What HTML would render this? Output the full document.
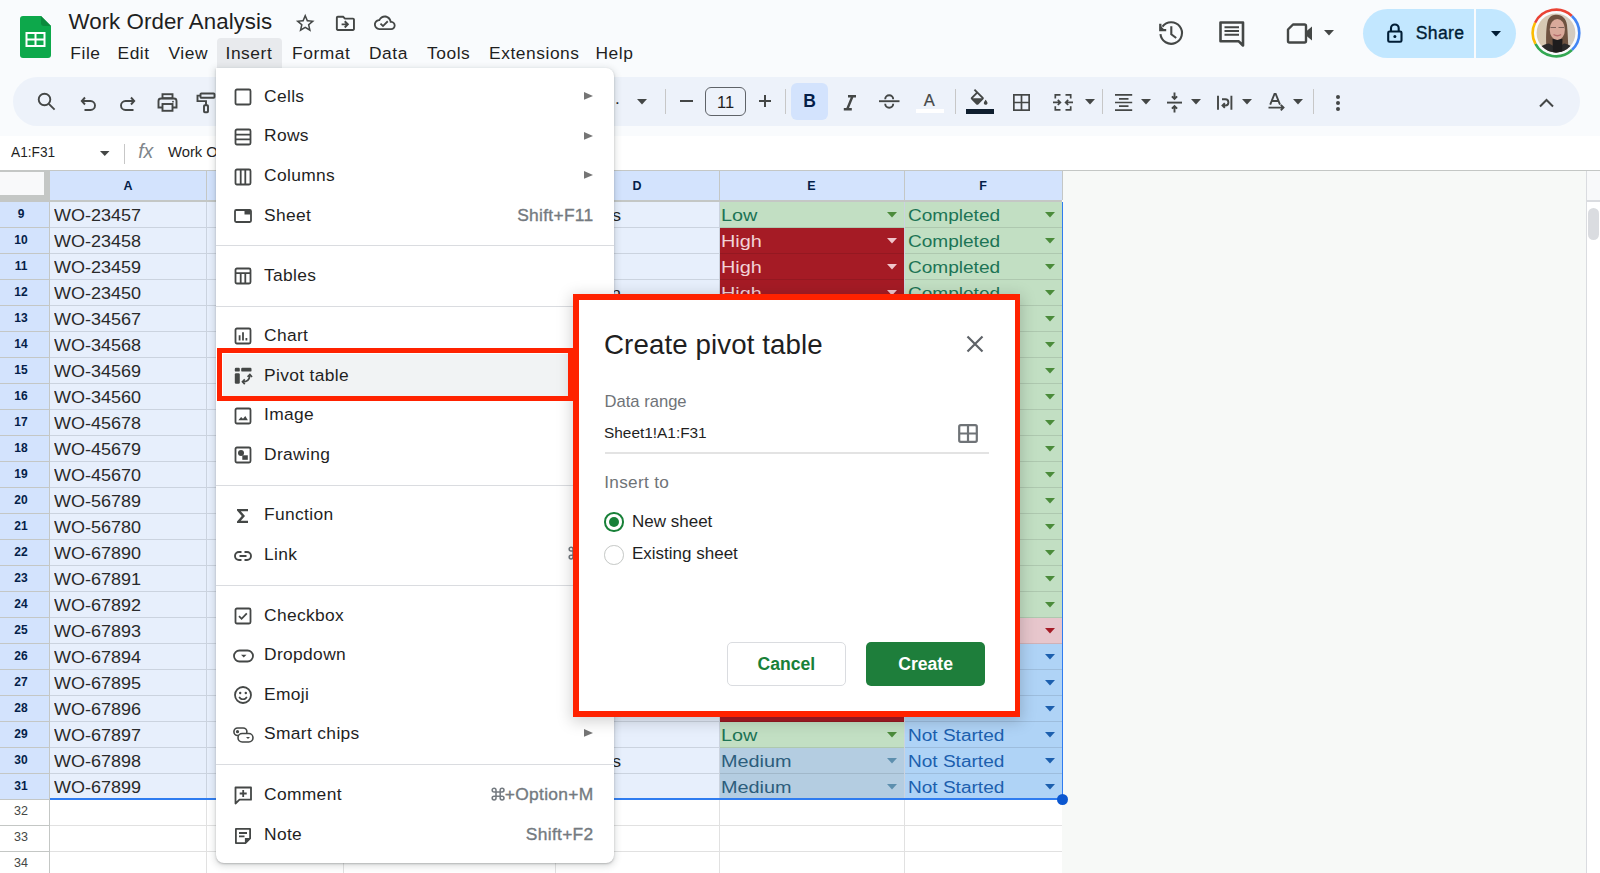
<!DOCTYPE html>
<html><head><meta charset="utf-8"><title>Work Order Analysis</title>
<style>
html,body{margin:0;padding:0;}
body{width:1600px;height:873px;overflow:hidden;position:relative;background:#fff;font-family:"Liberation Sans",sans-serif;}
.t{position:absolute;line-height:1;white-space:nowrap;}
.r{position:absolute;}
svg.r{overflow:visible;}
</style></head><body>
<div class="r" style="left:0px;top:0px;width:1600px;height:136px;background:#f9fbfd;"></div>
<svg class="r" style="left:20px;top:16px;" width="31" height="42" viewBox="0 0 31 42"><path d="M3 0H21L31 10V39a3 3 0 0 1-3 3H3a3 3 0 0 1-3-3V3a3 3 0 0 1 3-3Z" fill="#0da84b"/>
<path d="M21 0L31 10H24a3 3 0 0 1-3-3Z" fill="#0b8a3c"/>
<rect x="5.5" y="16" width="20" height="15" fill="#fff"/>
<rect x="7.5" y="18" width="7" height="4.5" fill="#0da84b"/><rect x="16.5" y="18" width="7" height="4.5" fill="#0da84b"/>
<rect x="7.5" y="24.5" width="7" height="4.5" fill="#0da84b"/><rect x="16.5" y="24.5" width="7" height="4.5" fill="#0da84b"/></svg>
<div class="t" style="left:68.5px;top:10.52px;font-size:22.3px;color:#1f1f1f;font-weight:400;letter-spacing:0.05px;">Work Order Analysis</div>
<svg class="r" style="left:294.4px;top:12.1px;" width="22" height="22" viewBox="0 0 22 22"><g transform="scale(0.935)"><path d="M22 9.24l-7.19-.62L12 2 9.19 8.63 2 9.24l5.46 4.73L5.82 21 12 17.27 18.18 21l-1.63-7.03L22 9.24zM12 15.4l-3.76 2.27 1-4.28-3.32-2.88 4.38-.38L12 6.1l1.71 4.04 4.38.38-3.32 2.88 1 4.28L12 15.4z" fill="#444746"/></g></svg>
<svg class="r" style="left:333.8px;top:11.9px;" width="24" height="24" viewBox="0 0 24 24"><g transform="scale(0.95)"><path d="M20 6h-8l-2-2H4c-1.1 0-1.99.9-1.99 2L2 18c0 1.1.9 2 2 2h16c1.1 0 2-.9 2-2V8c0-1.1-.9-2-2-2zm0 12H4V6h5.17l2 2H20v10zm-7.84-6H8v2h4.16l-1.59 1.59L11.99 17 16 13.01 11.99 9l-1.41 1.41L12.16 12z" fill="#444746"/></g></svg>
<svg class="r" style="left:374px;top:12.4px;" width="24" height="24" viewBox="0 0 24 24"><g transform="scale(0.9)"><path d="M19.35 10.04C18.67 6.59 15.64 4 12 4 9.11 4 6.6 5.64 5.35 8.04 2.34 8.36 0 10.91 0 14c0 3.310 2.69 6 6 6h13c2.76 0 5-2.24 5-5 0-2.64-2.05-4.78-4.65-4.96zM19 18H6c-2.21 0-4-1.79-4-4 0-2.05 1.53-3.76 3.56-3.970l1.070-.11.5-.95C8.08 7.14 9.94 6 12 6c2.62 0 4.88 1.86 5.39 4.43l.3 1.5 1.53.11c1.56.1 2.78 1.41 2.78 2.96 0 1.65-1.35 3-3 3zm-9-3.82l-2.09-2.09L6.5 13.5 10 17l6.01-6.01-1.41-1.41z" fill="#444746"/></g></svg>
<div class="r" style="left:216.5px;top:38px;width:65.5px;height:30px;background:#e8eaed;border-radius:4px 4px 0 0;"></div>
<div class="t" style="left:70.3px;top:44.67px;font-size:17.4px;color:#1f1f1f;font-weight:400;letter-spacing:0.55px;">File</div>
<div class="t" style="left:117.5px;top:44.67px;font-size:17.4px;color:#1f1f1f;font-weight:400;letter-spacing:0.55px;">Edit</div>
<div class="t" style="left:168.5px;top:44.67px;font-size:17.4px;color:#1f1f1f;font-weight:400;letter-spacing:0.55px;">View</div>
<div class="t" style="left:225.5px;top:44.67px;font-size:17.4px;color:#1f1f1f;font-weight:400;letter-spacing:0.55px;">Insert</div>
<div class="t" style="left:292px;top:44.67px;font-size:17.4px;color:#1f1f1f;font-weight:400;letter-spacing:0.55px;">Format</div>
<div class="t" style="left:369px;top:44.67px;font-size:17.4px;color:#1f1f1f;font-weight:400;letter-spacing:0.55px;">Data</div>
<div class="t" style="left:427px;top:44.67px;font-size:17.4px;color:#1f1f1f;font-weight:400;letter-spacing:0.55px;">Tools</div>
<div class="t" style="left:489px;top:44.67px;font-size:17.4px;color:#1f1f1f;font-weight:400;letter-spacing:0.55px;">Extensions</div>
<div class="t" style="left:595.5px;top:44.67px;font-size:17.4px;color:#1f1f1f;font-weight:400;letter-spacing:0.55px;">Help</div>
<svg class="r" style="left:1157px;top:19px;" width="28" height="28" viewBox="0 0 28 28"><path d="M5.46 7.65A10.8 10.8 0 1 1 3.46 15.13" fill="none" stroke="#444746" stroke-width="2.1"/><path d="M3.3 4.8V11.2H9.2" fill="none" stroke="#444746" stroke-width="2.3"/><path d="M3.3 6.5V11.2H8z" fill="#444746"/><path d="M14.3 7.3V15.3L19.2 19" fill="none" stroke="#444746" stroke-width="2.1"/></svg>
<svg class="r" style="left:1219px;top:21px;" width="27" height="25" viewBox="0 0 27 25"><path d="M1.5 1.5h22.5v16.5h-0v6.5l-4.2-4.2H1.5z" fill="none" stroke="#444746" stroke-width="2.6" stroke-linejoin="round"/><path d="M5.5 6.2h14.5M5.5 10h14.5M5.5 13.8h14.5" stroke="#444746" stroke-width="2"/></svg>
<svg class="r" style="left:1287px;top:23px;" width="26" height="21" viewBox="0 0 26 21"><path d="M6 1.5h11.5a1.5 1.5 0 0 1 1.5 1.5v15a1.5 1.5 0 0 1-1.5 1.5H2.5A1.5 1.5 0 0 1 1 18V6.5z" fill="none" stroke="#444746" stroke-width="2.4" stroke-linejoin="round"/><path d="M19 8.5L25 3.5v14l-6-5z" fill="#444746"/></svg>
<svg class="r" style="left:1324.3px;top:30.25px;" width="10" height="5.5" viewBox="0 0 10 5.5"><path d="M0 0H10L5.0 5.5Z" fill="#444746"/></svg>
<div class="r" style="left:1363px;top:9px;width:153px;height:49px;background:#c2e7ff;border-radius:24.5px;"></div>
<div class="r" style="left:1474.3px;top:9px;width:1.6px;height:49px;background:#f9fbfd;"></div>
<svg class="r" style="left:1387px;top:22.5px;" width="16" height="20" viewBox="0 0 16 20"><rect x="1.2" y="8.5" width="13.3" height="10.3" rx="1.3" fill="none" stroke="#001d35" stroke-width="2.1"/><path d="M4 8.5V5.3a3.85 3.85 0 0 1 7.7 0v3.2" fill="none" stroke="#001d35" stroke-width="2.1"/><circle cx="7.85" cy="13.6" r="1.5" fill="#001d35"/></svg>
<div class="t" style="left:1415.8px;top:24.70px;font-size:17.6px;color:#001d35;font-weight:400;letter-spacing:0.3px;-webkit-text-stroke:0.35px #001d35;">Share</div>
<svg class="r" style="left:1490.5px;top:31.25px;" width="10" height="5.5" viewBox="0 0 10 5.5"><path d="M0 0H10L5.0 5.5Z" fill="#001d35"/></svg>
<svg class="r" style="left:1531.3px;top:8.1px;" width="50" height="50" viewBox="0 0 50 50"><defs><linearGradient id="abg" x1="0" y1="0" x2="1" y2="0"><stop offset="0" stop-color="#d9c8ae"/><stop offset="1" stop-color="#d2ccc4"/></linearGradient></defs>
<path d="M4.06 14.79A23.3 23.3 0 0 1 40.89 7.96" fill="none" stroke="#ea4335" stroke-width="2.6"/>
<path d="M40.89 7.96A23.3 23.3 0 0 1 40.89 42.04" fill="none" stroke="#4285f4" stroke-width="2.6"/>
<path d="M40.89 42.04A23.3 23.3 0 0 1 4.43 35.94" fill="none" stroke="#34a853" stroke-width="2.6"/>
<path d="M4.43 35.94A23.3 23.3 0 0 1 4.06 14.79" fill="none" stroke="#fbbc04" stroke-width="2.6"/>
<clipPath id="ac"><circle cx="25" cy="25" r="19.4"/></clipPath>
<g clip-path="url(#ac)"><rect x="0" y="0" width="50" height="50" fill="url(#abg)"/>
<path d="M15.5 50C15 36 14.5 20 17 12C19 7.5 23 6.5 26 6.7C31 7 35 10 36 17C37 26 37 38 38 50Z" fill="#6e5240"/>
<path d="M2 50C5 40 12 36.5 18 35.5L26 40L33 35.5C39 36.5 45 40 48 50Z" fill="#2b2a2b"/>
<path d="M21.5 31L22 45H31L31.5 31Z" fill="#1e1c1d"/>
<ellipse cx="26.3" cy="21.5" rx="7.6" ry="10.5" fill="#d9a99a"/>
<path d="M19.5 19.5h5.5M27.5 19.5h5.5" stroke="#7b6058" stroke-width="1.1"/>
<path d="M22.5 26.5q3.8 2.5 7.6 0" fill="none" stroke="#b56d6d" stroke-width="1.3"/>
</g></svg>
<div class="r" style="left:13px;top:77px;width:1567px;height:49px;background:#edf2fa;border-radius:24.5px;"></div>
<svg class="r" style="left:37px;top:92px;" width="19" height="19" viewBox="0 0 19 19"><circle cx="7.5" cy="7.5" r="5.8" fill="none" stroke="#444746" stroke-width="1.9"/><path d="M11.8 11.8l5.8 5.8" fill="none" stroke="#444746" stroke-width="1.9"/></svg>
<svg class="r" style="left:80px;top:96px;" width="17" height="15" viewBox="0 0 17 15"><path d="M5 1.5L1.8 5 5 8.5" fill="none" stroke="#444746" stroke-width="1.9"/><path d="M2 5h8.5a4.5 4.5 0 0 1 0 9H4.5" fill="none" stroke="#444746" stroke-width="1.9"/></svg>
<svg class="r" style="left:119px;top:96px;" width="17" height="15" viewBox="0 0 17 15"><path d="M12 1.5L15.2 5 12 8.5" fill="none" stroke="#444746" stroke-width="1.9"/><path d="M15 5H6.5a4.5 4.5 0 0 0 0 9h8" fill="none" stroke="#444746" stroke-width="1.9"/></svg>
<svg class="r" style="left:157px;top:93px;" width="21" height="19" viewBox="0 0 21 19"><rect x="5.5" y="1.2" width="10" height="4" fill="none" stroke="#444746" stroke-width="1.9"/><path d="M5 14.5H1.5V8a2.5 2.5 0 0 1 2.5-2.5h13A2.5 2.5 0 0 1 19.5 8v6.5H16" fill="none" stroke="#444746" stroke-width="1.9"/><rect x="5.5" y="11" width="10" height="6.8" fill="none" stroke="#444746" stroke-width="1.9"/><circle cx="16" cy="8.7" r="0.9" fill="#444746"/></svg>
<svg class="r" style="left:196px;top:92px;" width="20" height="22" viewBox="0 0 20 22"><rect x="4.5" y="1.5" width="14" height="4.2" rx="0.8" fill="none" stroke="#444746" stroke-width="1.9"/><path d="M4.5 3.6H1.5v5.5h8.5v4" fill="none" stroke="#444746" stroke-width="1.9"/><rect x="8" y="13.2" width="4" height="7" rx="0.8" fill="none" stroke="#444746" stroke-width="1.9"/></svg>
<div class="t" style="left:615px;top:89.61px;font-size:17px;color:#1f1f1f;font-weight:400;">.</div>
<svg class="r" style="left:637.0px;top:99.25px;" width="10" height="5.5" viewBox="0 0 10 5.5"><path d="M0 0H10L5.0 5.5Z" fill="#444746"/></svg>
<div class="r" style="left:665px;top:89px;width:1px;height:24.5px;background:#c7c7c7;"></div>
<div class="r" style="left:680px;top:100px;width:12.5px;height:2px;background:#444746;"></div>
<div class="r" style="left:705px;top:86.5px;width:41px;height:29px;background:transparent;border:1.3px solid #5f6368;border-radius:6px;box-sizing:border-box;"></div>
<div class="t" style="left:725.5px;transform:translateX(-50%);top:93.53px;font-size:16.5px;color:#1f1f1f;font-weight:400;">11</div>
<div class="r" style="left:758.5px;top:100px;width:12.5px;height:2px;background:#444746;"></div>
<div class="r" style="left:763.75px;top:94.75px;width:2px;height:12.5px;background:#444746;"></div>
<div class="r" style="left:785.2px;top:89px;width:1px;height:24.5px;background:#c7c7c7;"></div>
<div class="r" style="left:791px;top:83px;width:37px;height:36.6px;background:#d3e3fd;border-radius:6px;"></div>
<div class="t" style="left:809.7px;transform:translateX(-50%);top:93.18px;font-size:17.5px;color:#041e49;font-weight:700;">B</div>
<svg class="r" style="left:842.5px;top:94.5px;" width="14" height="16" viewBox="0 0 14 16"><path d="M5 1.2h8M0.8 14.2h8M9.5 1.2L4.2 14.2" fill="none" stroke="#444746" stroke-width="2.4"/></svg>
<svg class="r" style="left:878.8px;top:94px;" width="20.5" height="16" viewBox="0 0 20.5 16"><path d="M0 7.2h20.5" fill="none" stroke="#444746" stroke-width="1.9"/><path d="M6.2 5.2a4 4 0 0 1 8 0" fill="none" stroke="#444746" stroke-width="1.9"/><path d="M6.2 9.8a4 4 0 0 0 8 0" fill="none" stroke="#444746" stroke-width="1.9"/></svg>
<div class="t" style="left:929.2px;transform:translateX(-50%);top:92.23px;font-size:16.5px;color:#444746;font-weight:400;-webkit-text-stroke:0.2px #444746;">A</div>
<div class="r" style="left:915.6px;top:108.8px;width:28px;height:4.7px;background:#ffffff;"></div>
<div class="r" style="left:955px;top:89px;width:1px;height:24.5px;background:#c7c7c7;"></div>
<svg class="r" style="left:968.2px;top:88.6px;" width="20" height="17" viewBox="0 0 20 17"><g transform="scale(0.93)"><path d="M16.56 8.94L7.62 0 6.21 1.41l2.38 2.38-5.15 5.15c-.59.59-.59 1.54 0 2.12l5.5 5.5c.29.29.68.44 1.06.44s.77-.15 1.06-.44l5.5-5.5c.59-.58.59-1.530 0-2.12zM5.21 10L10 5.21 14.79 10H5.21zM19 11.5s-2 2.17-2 3.5c0 1.1.9 2 2 2s2-.9 2-2c0-1.33-2-3.5-2-3.5z" fill="#444746"/></g></svg>
<div class="r" style="left:966.4px;top:108.7px;width:27.4px;height:5px;background:#0f1e2e;"></div>
<svg class="r" style="left:1013.3px;top:94.2px;" width="17" height="17" viewBox="0 0 17 17"><rect x="0.85" y="0.85" width="15.3" height="15.3" fill="none" stroke="#444746" stroke-width="1.7"/><path d="M8.5 1v15M1 8.5h15" stroke="#444746" stroke-width="1.7"/></svg>
<svg class="r" style="left:1053px;top:94px;" width="20" height="17" viewBox="0 0 20 17"><path d="M7.5 0.9H2.3V4.6M2.3 12.2V15.9H7.5M12.5 0.9H17.7V4.6M17.7 12.2V15.9H12.5" fill="none" stroke="#444746" stroke-width="1.7"/><path d="M0 8.4H7M4.8 5.8L7.4 8.4 4.8 11M20 8.4H13M15.2 5.8L12.6 8.4 15.2 11" fill="none" stroke="#444746" stroke-width="1.7"/></svg>
<svg class="r" style="left:1084.5px;top:99.25px;" width="10" height="5.5" viewBox="0 0 10 5.5"><path d="M0 0H10L5.0 5.5Z" fill="#444746"/></svg>
<div class="r" style="left:1102.2px;top:89px;width:1px;height:24.5px;background:#c7c7c7;"></div>
<svg class="r" style="left:1114.8px;top:94px;" width="18" height="17" viewBox="0 0 18 17"><path d="M0 0.9h17.2M4 4.9h9.5M0 8.5h17.2M4 12.1h9.5M0 16.1h17.2" stroke="#444746" stroke-width="1.6"/></svg>
<svg class="r" style="left:1140.8px;top:99.25px;" width="10" height="5.5" viewBox="0 0 10 5.5"><path d="M0 0H10L5.0 5.5Z" fill="#444746"/></svg>
<svg class="r" style="left:1167px;top:92px;" width="15" height="21" viewBox="0 0 15 21"><path d="M0 10.6H15" fill="none" stroke="#444746" stroke-width="1.9"/><path d="M7.5 0.5V7M4.9 4.4L7.5 7 10.1 4.4M7.5 20.5V14M4.9 16.6L7.5 14 10.1 16.6" fill="none" stroke="#444746" stroke-width="1.9"/></svg>
<svg class="r" style="left:1191.4px;top:99.25px;" width="10" height="5.5" viewBox="0 0 10 5.5"><path d="M0 0H10L5.0 5.5Z" fill="#444746"/></svg>
<svg class="r" style="left:1217px;top:95px;" width="16" height="15.5" viewBox="0 0 16 15.5"><path d="M1 0.8V14.8M14.4 0.8V14.8" fill="none" stroke="#444746" stroke-width="1.9"/><path d="M5 4.3H8.3a3.1 3.1 0 0 1 0 6.2H5.6M7.8 8.2L5.5 10.5 7.8 12.8" fill="none" stroke="#444746" stroke-width="1.9"/></svg>
<svg class="r" style="left:1242.0px;top:99.25px;" width="10" height="5.5" viewBox="0 0 10 5.5"><path d="M0 0H10L5.0 5.5Z" fill="#444746"/></svg>
<svg class="r" style="left:1268px;top:93px;" width="18" height="20" viewBox="0 0 18 20"><path d="M2.2 11.6L6.5 1h1.2L12 11.6M3.8 8h6.6" fill="none" stroke="#444746" stroke-width="1.9"/><path d="M0.5 14.6H15.5M12.8 11.9L15.5 14.6 12.8 17.3" fill="none" stroke="#444746" stroke-width="1.9"/></svg>
<svg class="r" style="left:1292.6px;top:99.25px;" width="10" height="5.5" viewBox="0 0 10 5.5"><path d="M0 0H10L5.0 5.5Z" fill="#444746"/></svg>
<div class="r" style="left:1312.5px;top:89px;width:1px;height:24.5px;background:#c7c7c7;"></div>
<div class="r" style="left:1336px;top:94.5px;width:4px;height:4px;border-radius:2px;background:#444746"></div>
<div class="r" style="left:1336px;top:100.8px;width:4px;height:4px;border-radius:2px;background:#444746"></div>
<div class="r" style="left:1336px;top:107.1px;width:4px;height:4px;border-radius:2px;background:#444746"></div>
<svg class="r" style="left:1539px;top:97.5px;" width="15" height="10" viewBox="0 0 15 10"><path d="M1 8.5l6.5-6.5 6.5 6.5" fill="none" stroke="#444746" stroke-width="2"/></svg>
<div class="r" style="left:0px;top:136px;width:1600px;height:34.5px;background:#ffffff;"></div>
<div class="t" style="left:10.5px;top:145.47px;font-size:14.8px;color:#1f1f1f;font-weight:400;transform:scaleX(0.925);transform-origin:0 0;">A1:F31</div>
<svg class="r" style="left:99.75px;top:151.0px;" width="9.5" height="5" viewBox="0 0 9.5 5"><path d="M0 0H9.5L4.75 5Z" fill="#444746"/></svg>
<div class="r" style="left:124px;top:143.7px;width:1px;height:20px;background:#c7c7c7;"></div>
<div class="t" style="left:138.2px;top:141.99px;font-size:19.5px;color:#80868b;font-weight:400;font-family:"Liberation Serif",serif;"><i>fx</i></div>
<div class="t" style="left:168px;top:144.97px;font-size:14.8px;color:#1f1f1f;font-weight:400;">Work Order Analysis</div>
<div class="r" style="left:0px;top:169.7px;width:1600px;height:1.5px;background:#c4c7c5;"></div>
<div class="r" style="left:1062px;top:171px;width:538px;height:702px;background:#f7f9f7;"></div>
<div class="r" style="left:1586px;top:171px;width:1px;height:702px;background:#dadce0;"></div>
<div class="r" style="left:1587px;top:171px;width:13px;height:29px;background:#f8f9fa;"></div>
<div class="r" style="left:1587px;top:200px;width:13px;height:1.5px;background:#dadce0;"></div>
<div class="r" style="left:1587px;top:201.5px;width:13px;height:671.5px;background:#ffffff;"></div>
<div class="r" style="left:1588px;top:208px;width:11px;height:32px;background:#dadce0;border-radius:5.5px;"></div>
<div class="r" style="left:0px;top:171px;width:49.5px;height:31px;background:#c4c7c5;"></div>
<div class="r" style="left:0px;top:171.5px;width:44px;height:23.5px;background:#f8f9fa;"></div>
<div class="r" style="left:50px;top:171px;width:1012px;height:29px;background:#d3e3fd;"></div>
<div class="r" style="left:50px;top:200px;width:1012px;height:2px;background:#c4c7c5;"></div>
<div class="r" style="left:205.5px;top:171px;width:1px;height:29px;background:#c4c7c5;"></div>
<div class="r" style="left:342.5px;top:171px;width:1px;height:29px;background:#c4c7c5;"></div>
<div class="r" style="left:554.5px;top:171px;width:1px;height:29px;background:#c4c7c5;"></div>
<div class="r" style="left:718.5px;top:171px;width:1px;height:29px;background:#c4c7c5;"></div>
<div class="r" style="left:903.5px;top:171px;width:1px;height:29px;background:#c4c7c5;"></div>
<div class="r" style="left:1061.5px;top:171px;width:1px;height:29px;background:#c4c7c5;"></div>
<div class="t" style="left:128.0px;transform:translateX(-50%);top:179.72px;font-size:12.5px;color:#041e49;font-weight:700;">A</div>
<div class="t" style="left:274.5px;transform:translateX(-50%);top:179.72px;font-size:12.5px;color:#041e49;font-weight:700;">B</div>
<div class="t" style="left:449.0px;transform:translateX(-50%);top:179.72px;font-size:12.5px;color:#041e49;font-weight:700;">C</div>
<div class="t" style="left:637.0px;transform:translateX(-50%);top:179.72px;font-size:12.5px;color:#041e49;font-weight:700;">D</div>
<div class="t" style="left:811.5px;transform:translateX(-50%);top:179.72px;font-size:12.5px;color:#041e49;font-weight:700;">E</div>
<div class="t" style="left:983.0px;transform:translateX(-50%);top:179.72px;font-size:12.5px;color:#041e49;font-weight:700;">F</div>
<div class="r" style="left:0px;top:202px;width:49px;height:25px;background:#d3e3fd;"></div>
<div class="r" style="left:0px;top:227px;width:49px;height:1px;background:#c4c7c5;"></div>
<div class="r" style="left:49px;top:202px;width:1px;height:26px;background:#c4c7c5;"></div>
<div class="r" style="left:50px;top:202px;width:1012px;height:25px;background:#e7effc;"></div>
<div class="r" style="left:50px;top:227px;width:1012px;height:1px;background:#cbd3df;"></div>
<div class="r" style="left:205.5px;top:202px;width:1px;height:26px;background:#cbd3df;"></div>
<div class="r" style="left:342.5px;top:202px;width:1px;height:26px;background:#cbd3df;"></div>
<div class="r" style="left:554.5px;top:202px;width:1px;height:26px;background:#cbd3df;"></div>
<div class="r" style="left:718.5px;top:202px;width:1px;height:26px;background:#cbd3df;"></div>
<div class="r" style="left:903.5px;top:202px;width:1px;height:26px;background:#cbd3df;"></div>
<div class="t" style="left:21px;transform:translateX(-50%);top:207.74px;font-size:12px;color:#041e49;font-weight:700;">9</div>
<div class="t" style="left:54.4px;top:208.05px;font-size:16px;color:#2a2a2a;font-weight:400;transform:scaleX(1.125);transform-origin:0 0;">WO-23457</div>
<div class="r" style="left:719.5px;top:202px;width:184px;height:26px;background:#c2dfc3;"></div>
<div class="r" style="left:719.5px;top:227px;width:184px;height:1px;background:rgba(0,0,0,0.1);"></div>
<div class="t" style="left:721.4px;top:207.55px;font-size:16px;color:#1c7455;font-weight:400;transform:scaleX(1.24);transform-origin:0 0;">Low</div>
<svg class="r" style="left:886.6px;top:212.05px;" width="10" height="5.5" viewBox="0 0 10 5.5"><path d="M0 0H10L5.0 5.5Z" fill="#4b8b3b"/></svg>
<div class="r" style="left:904.5px;top:202px;width:157px;height:26px;background:#c2dfc3;"></div>
<div class="r" style="left:904.5px;top:227px;width:157px;height:1px;background:rgba(0,0,0,0.1);"></div>
<div class="t" style="left:908.1px;top:207.55px;font-size:16px;color:#1c7455;font-weight:400;transform:scaleX(1.19);transform-origin:0 0;">Completed</div>
<svg class="r" style="left:1044.5px;top:212.05px;" width="10" height="5.5" viewBox="0 0 10 5.5"><path d="M0 0H10L5.0 5.5Z" fill="#4b8b3b"/></svg>
<div class="r" style="left:0px;top:228px;width:49px;height:25px;background:#d3e3fd;"></div>
<div class="r" style="left:0px;top:253px;width:49px;height:1px;background:#c4c7c5;"></div>
<div class="r" style="left:49px;top:228px;width:1px;height:26px;background:#c4c7c5;"></div>
<div class="r" style="left:50px;top:228px;width:1012px;height:25px;background:#e7effc;"></div>
<div class="r" style="left:50px;top:253px;width:1012px;height:1px;background:#cbd3df;"></div>
<div class="r" style="left:205.5px;top:228px;width:1px;height:26px;background:#cbd3df;"></div>
<div class="r" style="left:342.5px;top:228px;width:1px;height:26px;background:#cbd3df;"></div>
<div class="r" style="left:554.5px;top:228px;width:1px;height:26px;background:#cbd3df;"></div>
<div class="r" style="left:718.5px;top:228px;width:1px;height:26px;background:#cbd3df;"></div>
<div class="r" style="left:903.5px;top:228px;width:1px;height:26px;background:#cbd3df;"></div>
<div class="t" style="left:21px;transform:translateX(-50%);top:233.74px;font-size:12px;color:#041e49;font-weight:700;">10</div>
<div class="t" style="left:54.4px;top:234.05px;font-size:16px;color:#2a2a2a;font-weight:400;transform:scaleX(1.125);transform-origin:0 0;">WO-23458</div>
<div class="r" style="left:719.5px;top:228px;width:184px;height:26px;background:#a51b25;"></div>
<div class="r" style="left:719.5px;top:253px;width:184px;height:1px;background:rgba(0,0,0,0.1);"></div>
<div class="t" style="left:721.4px;top:233.55px;font-size:16px;color:#f2d3d8;font-weight:400;transform:scaleX(1.24);transform-origin:0 0;">High</div>
<svg class="r" style="left:886.6px;top:238.05px;" width="10" height="5.5" viewBox="0 0 10 5.5"><path d="M0 0H10L5.0 5.5Z" fill="#f0c6cc"/></svg>
<div class="r" style="left:904.5px;top:228px;width:157px;height:26px;background:#c2dfc3;"></div>
<div class="r" style="left:904.5px;top:253px;width:157px;height:1px;background:rgba(0,0,0,0.1);"></div>
<div class="t" style="left:908.1px;top:233.55px;font-size:16px;color:#1c7455;font-weight:400;transform:scaleX(1.19);transform-origin:0 0;">Completed</div>
<svg class="r" style="left:1044.5px;top:238.05px;" width="10" height="5.5" viewBox="0 0 10 5.5"><path d="M0 0H10L5.0 5.5Z" fill="#4b8b3b"/></svg>
<div class="r" style="left:0px;top:254px;width:49px;height:25px;background:#d3e3fd;"></div>
<div class="r" style="left:0px;top:279px;width:49px;height:1px;background:#c4c7c5;"></div>
<div class="r" style="left:49px;top:254px;width:1px;height:26px;background:#c4c7c5;"></div>
<div class="r" style="left:50px;top:254px;width:1012px;height:25px;background:#e7effc;"></div>
<div class="r" style="left:50px;top:279px;width:1012px;height:1px;background:#cbd3df;"></div>
<div class="r" style="left:205.5px;top:254px;width:1px;height:26px;background:#cbd3df;"></div>
<div class="r" style="left:342.5px;top:254px;width:1px;height:26px;background:#cbd3df;"></div>
<div class="r" style="left:554.5px;top:254px;width:1px;height:26px;background:#cbd3df;"></div>
<div class="r" style="left:718.5px;top:254px;width:1px;height:26px;background:#cbd3df;"></div>
<div class="r" style="left:903.5px;top:254px;width:1px;height:26px;background:#cbd3df;"></div>
<div class="t" style="left:21px;transform:translateX(-50%);top:259.74px;font-size:12px;color:#041e49;font-weight:700;">11</div>
<div class="t" style="left:54.4px;top:260.05px;font-size:16px;color:#2a2a2a;font-weight:400;transform:scaleX(1.125);transform-origin:0 0;">WO-23459</div>
<div class="r" style="left:719.5px;top:254px;width:184px;height:26px;background:#a51b25;"></div>
<div class="r" style="left:719.5px;top:279px;width:184px;height:1px;background:rgba(0,0,0,0.1);"></div>
<div class="t" style="left:721.4px;top:259.55px;font-size:16px;color:#f2d3d8;font-weight:400;transform:scaleX(1.24);transform-origin:0 0;">High</div>
<svg class="r" style="left:886.6px;top:264.05px;" width="10" height="5.5" viewBox="0 0 10 5.5"><path d="M0 0H10L5.0 5.5Z" fill="#f0c6cc"/></svg>
<div class="r" style="left:904.5px;top:254px;width:157px;height:26px;background:#c2dfc3;"></div>
<div class="r" style="left:904.5px;top:279px;width:157px;height:1px;background:rgba(0,0,0,0.1);"></div>
<div class="t" style="left:908.1px;top:259.55px;font-size:16px;color:#1c7455;font-weight:400;transform:scaleX(1.19);transform-origin:0 0;">Completed</div>
<svg class="r" style="left:1044.5px;top:264.05px;" width="10" height="5.5" viewBox="0 0 10 5.5"><path d="M0 0H10L5.0 5.5Z" fill="#4b8b3b"/></svg>
<div class="r" style="left:0px;top:280px;width:49px;height:25px;background:#d3e3fd;"></div>
<div class="r" style="left:0px;top:305px;width:49px;height:1px;background:#c4c7c5;"></div>
<div class="r" style="left:49px;top:280px;width:1px;height:26px;background:#c4c7c5;"></div>
<div class="r" style="left:50px;top:280px;width:1012px;height:25px;background:#e7effc;"></div>
<div class="r" style="left:50px;top:305px;width:1012px;height:1px;background:#cbd3df;"></div>
<div class="r" style="left:205.5px;top:280px;width:1px;height:26px;background:#cbd3df;"></div>
<div class="r" style="left:342.5px;top:280px;width:1px;height:26px;background:#cbd3df;"></div>
<div class="r" style="left:554.5px;top:280px;width:1px;height:26px;background:#cbd3df;"></div>
<div class="r" style="left:718.5px;top:280px;width:1px;height:26px;background:#cbd3df;"></div>
<div class="r" style="left:903.5px;top:280px;width:1px;height:26px;background:#cbd3df;"></div>
<div class="t" style="left:21px;transform:translateX(-50%);top:285.74px;font-size:12px;color:#041e49;font-weight:700;">12</div>
<div class="t" style="left:54.4px;top:286.05px;font-size:16px;color:#2a2a2a;font-weight:400;transform:scaleX(1.125);transform-origin:0 0;">WO-23450</div>
<div class="r" style="left:719.5px;top:280px;width:184px;height:26px;background:#a51b25;"></div>
<div class="r" style="left:719.5px;top:305px;width:184px;height:1px;background:rgba(0,0,0,0.1);"></div>
<div class="t" style="left:721.4px;top:285.55px;font-size:16px;color:#f2d3d8;font-weight:400;transform:scaleX(1.24);transform-origin:0 0;">High</div>
<svg class="r" style="left:886.6px;top:290.05px;" width="10" height="5.5" viewBox="0 0 10 5.5"><path d="M0 0H10L5.0 5.5Z" fill="#f0c6cc"/></svg>
<div class="r" style="left:904.5px;top:280px;width:157px;height:26px;background:#c2dfc3;"></div>
<div class="r" style="left:904.5px;top:305px;width:157px;height:1px;background:rgba(0,0,0,0.1);"></div>
<div class="t" style="left:908.1px;top:285.55px;font-size:16px;color:#1c7455;font-weight:400;transform:scaleX(1.19);transform-origin:0 0;">Completed</div>
<svg class="r" style="left:1044.5px;top:290.05px;" width="10" height="5.5" viewBox="0 0 10 5.5"><path d="M0 0H10L5.0 5.5Z" fill="#4b8b3b"/></svg>
<div class="r" style="left:0px;top:306px;width:49px;height:25px;background:#d3e3fd;"></div>
<div class="r" style="left:0px;top:331px;width:49px;height:1px;background:#c4c7c5;"></div>
<div class="r" style="left:49px;top:306px;width:1px;height:26px;background:#c4c7c5;"></div>
<div class="r" style="left:50px;top:306px;width:1012px;height:25px;background:#e7effc;"></div>
<div class="r" style="left:50px;top:331px;width:1012px;height:1px;background:#cbd3df;"></div>
<div class="r" style="left:205.5px;top:306px;width:1px;height:26px;background:#cbd3df;"></div>
<div class="r" style="left:342.5px;top:306px;width:1px;height:26px;background:#cbd3df;"></div>
<div class="r" style="left:554.5px;top:306px;width:1px;height:26px;background:#cbd3df;"></div>
<div class="r" style="left:718.5px;top:306px;width:1px;height:26px;background:#cbd3df;"></div>
<div class="r" style="left:903.5px;top:306px;width:1px;height:26px;background:#cbd3df;"></div>
<div class="t" style="left:21px;transform:translateX(-50%);top:311.74px;font-size:12px;color:#041e49;font-weight:700;">13</div>
<div class="t" style="left:54.4px;top:312.05px;font-size:16px;color:#2a2a2a;font-weight:400;transform:scaleX(1.125);transform-origin:0 0;">WO-34567</div>
<div class="r" style="left:719.5px;top:306px;width:184px;height:26px;background:#c2dfc3;"></div>
<div class="r" style="left:719.5px;top:331px;width:184px;height:1px;background:rgba(0,0,0,0.1);"></div>
<svg class="r" style="left:886.6px;top:316.05px;" width="10" height="5.5" viewBox="0 0 10 5.5"><path d="M0 0H10L5.0 5.5Z" fill="#4b8b3b"/></svg>
<div class="r" style="left:904.5px;top:306px;width:157px;height:26px;background:#c2dfc3;"></div>
<div class="r" style="left:904.5px;top:331px;width:157px;height:1px;background:rgba(0,0,0,0.1);"></div>
<div class="t" style="left:908.1px;top:311.55px;font-size:16px;color:#1c7455;font-weight:400;transform:scaleX(1.19);transform-origin:0 0;">Completed</div>
<svg class="r" style="left:1044.5px;top:316.05px;" width="10" height="5.5" viewBox="0 0 10 5.5"><path d="M0 0H10L5.0 5.5Z" fill="#4b8b3b"/></svg>
<div class="r" style="left:0px;top:332px;width:49px;height:25px;background:#d3e3fd;"></div>
<div class="r" style="left:0px;top:357px;width:49px;height:1px;background:#c4c7c5;"></div>
<div class="r" style="left:49px;top:332px;width:1px;height:26px;background:#c4c7c5;"></div>
<div class="r" style="left:50px;top:332px;width:1012px;height:25px;background:#e7effc;"></div>
<div class="r" style="left:50px;top:357px;width:1012px;height:1px;background:#cbd3df;"></div>
<div class="r" style="left:205.5px;top:332px;width:1px;height:26px;background:#cbd3df;"></div>
<div class="r" style="left:342.5px;top:332px;width:1px;height:26px;background:#cbd3df;"></div>
<div class="r" style="left:554.5px;top:332px;width:1px;height:26px;background:#cbd3df;"></div>
<div class="r" style="left:718.5px;top:332px;width:1px;height:26px;background:#cbd3df;"></div>
<div class="r" style="left:903.5px;top:332px;width:1px;height:26px;background:#cbd3df;"></div>
<div class="t" style="left:21px;transform:translateX(-50%);top:337.74px;font-size:12px;color:#041e49;font-weight:700;">14</div>
<div class="t" style="left:54.4px;top:338.05px;font-size:16px;color:#2a2a2a;font-weight:400;transform:scaleX(1.125);transform-origin:0 0;">WO-34568</div>
<div class="r" style="left:719.5px;top:332px;width:184px;height:26px;background:#a51b25;"></div>
<div class="r" style="left:719.5px;top:357px;width:184px;height:1px;background:rgba(0,0,0,0.1);"></div>
<svg class="r" style="left:886.6px;top:342.05px;" width="10" height="5.5" viewBox="0 0 10 5.5"><path d="M0 0H10L5.0 5.5Z" fill="#f0c6cc"/></svg>
<div class="r" style="left:904.5px;top:332px;width:157px;height:26px;background:#c2dfc3;"></div>
<div class="r" style="left:904.5px;top:357px;width:157px;height:1px;background:rgba(0,0,0,0.1);"></div>
<div class="t" style="left:908.1px;top:337.55px;font-size:16px;color:#1c7455;font-weight:400;transform:scaleX(1.19);transform-origin:0 0;">Completed</div>
<svg class="r" style="left:1044.5px;top:342.05px;" width="10" height="5.5" viewBox="0 0 10 5.5"><path d="M0 0H10L5.0 5.5Z" fill="#4b8b3b"/></svg>
<div class="r" style="left:0px;top:358px;width:49px;height:25px;background:#d3e3fd;"></div>
<div class="r" style="left:0px;top:383px;width:49px;height:1px;background:#c4c7c5;"></div>
<div class="r" style="left:49px;top:358px;width:1px;height:26px;background:#c4c7c5;"></div>
<div class="r" style="left:50px;top:358px;width:1012px;height:25px;background:#e7effc;"></div>
<div class="r" style="left:50px;top:383px;width:1012px;height:1px;background:#cbd3df;"></div>
<div class="r" style="left:205.5px;top:358px;width:1px;height:26px;background:#cbd3df;"></div>
<div class="r" style="left:342.5px;top:358px;width:1px;height:26px;background:#cbd3df;"></div>
<div class="r" style="left:554.5px;top:358px;width:1px;height:26px;background:#cbd3df;"></div>
<div class="r" style="left:718.5px;top:358px;width:1px;height:26px;background:#cbd3df;"></div>
<div class="r" style="left:903.5px;top:358px;width:1px;height:26px;background:#cbd3df;"></div>
<div class="t" style="left:21px;transform:translateX(-50%);top:363.74px;font-size:12px;color:#041e49;font-weight:700;">15</div>
<div class="t" style="left:54.4px;top:364.05px;font-size:16px;color:#2a2a2a;font-weight:400;transform:scaleX(1.125);transform-origin:0 0;">WO-34569</div>
<div class="r" style="left:719.5px;top:358px;width:184px;height:26px;background:#b4cde1;"></div>
<div class="r" style="left:719.5px;top:383px;width:184px;height:1px;background:rgba(0,0,0,0.1);"></div>
<svg class="r" style="left:886.6px;top:368.05px;" width="10" height="5.5" viewBox="0 0 10 5.5"><path d="M0 0H10L5.0 5.5Z" fill="#5d8fae"/></svg>
<div class="r" style="left:904.5px;top:358px;width:157px;height:26px;background:#c2dfc3;"></div>
<div class="r" style="left:904.5px;top:383px;width:157px;height:1px;background:rgba(0,0,0,0.1);"></div>
<div class="t" style="left:908.1px;top:363.55px;font-size:16px;color:#1c7455;font-weight:400;transform:scaleX(1.19);transform-origin:0 0;">Completed</div>
<svg class="r" style="left:1044.5px;top:368.05px;" width="10" height="5.5" viewBox="0 0 10 5.5"><path d="M0 0H10L5.0 5.5Z" fill="#4b8b3b"/></svg>
<div class="r" style="left:0px;top:384px;width:49px;height:25px;background:#d3e3fd;"></div>
<div class="r" style="left:0px;top:409px;width:49px;height:1px;background:#c4c7c5;"></div>
<div class="r" style="left:49px;top:384px;width:1px;height:26px;background:#c4c7c5;"></div>
<div class="r" style="left:50px;top:384px;width:1012px;height:25px;background:#e7effc;"></div>
<div class="r" style="left:50px;top:409px;width:1012px;height:1px;background:#cbd3df;"></div>
<div class="r" style="left:205.5px;top:384px;width:1px;height:26px;background:#cbd3df;"></div>
<div class="r" style="left:342.5px;top:384px;width:1px;height:26px;background:#cbd3df;"></div>
<div class="r" style="left:554.5px;top:384px;width:1px;height:26px;background:#cbd3df;"></div>
<div class="r" style="left:718.5px;top:384px;width:1px;height:26px;background:#cbd3df;"></div>
<div class="r" style="left:903.5px;top:384px;width:1px;height:26px;background:#cbd3df;"></div>
<div class="t" style="left:21px;transform:translateX(-50%);top:389.74px;font-size:12px;color:#041e49;font-weight:700;">16</div>
<div class="t" style="left:54.4px;top:390.05px;font-size:16px;color:#2a2a2a;font-weight:400;transform:scaleX(1.125);transform-origin:0 0;">WO-34560</div>
<div class="r" style="left:719.5px;top:384px;width:184px;height:26px;background:#c2dfc3;"></div>
<div class="r" style="left:719.5px;top:409px;width:184px;height:1px;background:rgba(0,0,0,0.1);"></div>
<svg class="r" style="left:886.6px;top:394.05px;" width="10" height="5.5" viewBox="0 0 10 5.5"><path d="M0 0H10L5.0 5.5Z" fill="#4b8b3b"/></svg>
<div class="r" style="left:904.5px;top:384px;width:157px;height:26px;background:#c2dfc3;"></div>
<div class="r" style="left:904.5px;top:409px;width:157px;height:1px;background:rgba(0,0,0,0.1);"></div>
<div class="t" style="left:908.1px;top:389.55px;font-size:16px;color:#1c7455;font-weight:400;transform:scaleX(1.19);transform-origin:0 0;">Completed</div>
<svg class="r" style="left:1044.5px;top:394.05px;" width="10" height="5.5" viewBox="0 0 10 5.5"><path d="M0 0H10L5.0 5.5Z" fill="#4b8b3b"/></svg>
<div class="r" style="left:0px;top:410px;width:49px;height:25px;background:#d3e3fd;"></div>
<div class="r" style="left:0px;top:435px;width:49px;height:1px;background:#c4c7c5;"></div>
<div class="r" style="left:49px;top:410px;width:1px;height:26px;background:#c4c7c5;"></div>
<div class="r" style="left:50px;top:410px;width:1012px;height:25px;background:#e7effc;"></div>
<div class="r" style="left:50px;top:435px;width:1012px;height:1px;background:#cbd3df;"></div>
<div class="r" style="left:205.5px;top:410px;width:1px;height:26px;background:#cbd3df;"></div>
<div class="r" style="left:342.5px;top:410px;width:1px;height:26px;background:#cbd3df;"></div>
<div class="r" style="left:554.5px;top:410px;width:1px;height:26px;background:#cbd3df;"></div>
<div class="r" style="left:718.5px;top:410px;width:1px;height:26px;background:#cbd3df;"></div>
<div class="r" style="left:903.5px;top:410px;width:1px;height:26px;background:#cbd3df;"></div>
<div class="t" style="left:21px;transform:translateX(-50%);top:415.74px;font-size:12px;color:#041e49;font-weight:700;">17</div>
<div class="t" style="left:54.4px;top:416.05px;font-size:16px;color:#2a2a2a;font-weight:400;transform:scaleX(1.125);transform-origin:0 0;">WO-45678</div>
<div class="r" style="left:719.5px;top:410px;width:184px;height:26px;background:#a51b25;"></div>
<div class="r" style="left:719.5px;top:435px;width:184px;height:1px;background:rgba(0,0,0,0.1);"></div>
<svg class="r" style="left:886.6px;top:420.05px;" width="10" height="5.5" viewBox="0 0 10 5.5"><path d="M0 0H10L5.0 5.5Z" fill="#f0c6cc"/></svg>
<div class="r" style="left:904.5px;top:410px;width:157px;height:26px;background:#c2dfc3;"></div>
<div class="r" style="left:904.5px;top:435px;width:157px;height:1px;background:rgba(0,0,0,0.1);"></div>
<div class="t" style="left:908.1px;top:415.55px;font-size:16px;color:#1c7455;font-weight:400;transform:scaleX(1.19);transform-origin:0 0;">Completed</div>
<svg class="r" style="left:1044.5px;top:420.05px;" width="10" height="5.5" viewBox="0 0 10 5.5"><path d="M0 0H10L5.0 5.5Z" fill="#4b8b3b"/></svg>
<div class="r" style="left:0px;top:436px;width:49px;height:25px;background:#d3e3fd;"></div>
<div class="r" style="left:0px;top:461px;width:49px;height:1px;background:#c4c7c5;"></div>
<div class="r" style="left:49px;top:436px;width:1px;height:26px;background:#c4c7c5;"></div>
<div class="r" style="left:50px;top:436px;width:1012px;height:25px;background:#e7effc;"></div>
<div class="r" style="left:50px;top:461px;width:1012px;height:1px;background:#cbd3df;"></div>
<div class="r" style="left:205.5px;top:436px;width:1px;height:26px;background:#cbd3df;"></div>
<div class="r" style="left:342.5px;top:436px;width:1px;height:26px;background:#cbd3df;"></div>
<div class="r" style="left:554.5px;top:436px;width:1px;height:26px;background:#cbd3df;"></div>
<div class="r" style="left:718.5px;top:436px;width:1px;height:26px;background:#cbd3df;"></div>
<div class="r" style="left:903.5px;top:436px;width:1px;height:26px;background:#cbd3df;"></div>
<div class="t" style="left:21px;transform:translateX(-50%);top:441.74px;font-size:12px;color:#041e49;font-weight:700;">18</div>
<div class="t" style="left:54.4px;top:442.05px;font-size:16px;color:#2a2a2a;font-weight:400;transform:scaleX(1.125);transform-origin:0 0;">WO-45679</div>
<div class="r" style="left:719.5px;top:436px;width:184px;height:26px;background:#b4cde1;"></div>
<div class="r" style="left:719.5px;top:461px;width:184px;height:1px;background:rgba(0,0,0,0.1);"></div>
<svg class="r" style="left:886.6px;top:446.05px;" width="10" height="5.5" viewBox="0 0 10 5.5"><path d="M0 0H10L5.0 5.5Z" fill="#5d8fae"/></svg>
<div class="r" style="left:904.5px;top:436px;width:157px;height:26px;background:#c2dfc3;"></div>
<div class="r" style="left:904.5px;top:461px;width:157px;height:1px;background:rgba(0,0,0,0.1);"></div>
<div class="t" style="left:908.1px;top:441.55px;font-size:16px;color:#1c7455;font-weight:400;transform:scaleX(1.19);transform-origin:0 0;">Completed</div>
<svg class="r" style="left:1044.5px;top:446.05px;" width="10" height="5.5" viewBox="0 0 10 5.5"><path d="M0 0H10L5.0 5.5Z" fill="#4b8b3b"/></svg>
<div class="r" style="left:0px;top:462px;width:49px;height:25px;background:#d3e3fd;"></div>
<div class="r" style="left:0px;top:487px;width:49px;height:1px;background:#c4c7c5;"></div>
<div class="r" style="left:49px;top:462px;width:1px;height:26px;background:#c4c7c5;"></div>
<div class="r" style="left:50px;top:462px;width:1012px;height:25px;background:#e7effc;"></div>
<div class="r" style="left:50px;top:487px;width:1012px;height:1px;background:#cbd3df;"></div>
<div class="r" style="left:205.5px;top:462px;width:1px;height:26px;background:#cbd3df;"></div>
<div class="r" style="left:342.5px;top:462px;width:1px;height:26px;background:#cbd3df;"></div>
<div class="r" style="left:554.5px;top:462px;width:1px;height:26px;background:#cbd3df;"></div>
<div class="r" style="left:718.5px;top:462px;width:1px;height:26px;background:#cbd3df;"></div>
<div class="r" style="left:903.5px;top:462px;width:1px;height:26px;background:#cbd3df;"></div>
<div class="t" style="left:21px;transform:translateX(-50%);top:467.74px;font-size:12px;color:#041e49;font-weight:700;">19</div>
<div class="t" style="left:54.4px;top:468.05px;font-size:16px;color:#2a2a2a;font-weight:400;transform:scaleX(1.125);transform-origin:0 0;">WO-45670</div>
<div class="r" style="left:719.5px;top:462px;width:184px;height:26px;background:#c2dfc3;"></div>
<div class="r" style="left:719.5px;top:487px;width:184px;height:1px;background:rgba(0,0,0,0.1);"></div>
<svg class="r" style="left:886.6px;top:472.05px;" width="10" height="5.5" viewBox="0 0 10 5.5"><path d="M0 0H10L5.0 5.5Z" fill="#4b8b3b"/></svg>
<div class="r" style="left:904.5px;top:462px;width:157px;height:26px;background:#c2dfc3;"></div>
<div class="r" style="left:904.5px;top:487px;width:157px;height:1px;background:rgba(0,0,0,0.1);"></div>
<div class="t" style="left:908.1px;top:467.55px;font-size:16px;color:#1c7455;font-weight:400;transform:scaleX(1.19);transform-origin:0 0;">Completed</div>
<svg class="r" style="left:1044.5px;top:472.05px;" width="10" height="5.5" viewBox="0 0 10 5.5"><path d="M0 0H10L5.0 5.5Z" fill="#4b8b3b"/></svg>
<div class="r" style="left:0px;top:488px;width:49px;height:25px;background:#d3e3fd;"></div>
<div class="r" style="left:0px;top:513px;width:49px;height:1px;background:#c4c7c5;"></div>
<div class="r" style="left:49px;top:488px;width:1px;height:26px;background:#c4c7c5;"></div>
<div class="r" style="left:50px;top:488px;width:1012px;height:25px;background:#e7effc;"></div>
<div class="r" style="left:50px;top:513px;width:1012px;height:1px;background:#cbd3df;"></div>
<div class="r" style="left:205.5px;top:488px;width:1px;height:26px;background:#cbd3df;"></div>
<div class="r" style="left:342.5px;top:488px;width:1px;height:26px;background:#cbd3df;"></div>
<div class="r" style="left:554.5px;top:488px;width:1px;height:26px;background:#cbd3df;"></div>
<div class="r" style="left:718.5px;top:488px;width:1px;height:26px;background:#cbd3df;"></div>
<div class="r" style="left:903.5px;top:488px;width:1px;height:26px;background:#cbd3df;"></div>
<div class="t" style="left:21px;transform:translateX(-50%);top:493.74px;font-size:12px;color:#041e49;font-weight:700;">20</div>
<div class="t" style="left:54.4px;top:494.05px;font-size:16px;color:#2a2a2a;font-weight:400;transform:scaleX(1.125);transform-origin:0 0;">WO-56789</div>
<div class="r" style="left:719.5px;top:488px;width:184px;height:26px;background:#b4cde1;"></div>
<div class="r" style="left:719.5px;top:513px;width:184px;height:1px;background:rgba(0,0,0,0.1);"></div>
<svg class="r" style="left:886.6px;top:498.05px;" width="10" height="5.5" viewBox="0 0 10 5.5"><path d="M0 0H10L5.0 5.5Z" fill="#5d8fae"/></svg>
<div class="r" style="left:904.5px;top:488px;width:157px;height:26px;background:#c2dfc3;"></div>
<div class="r" style="left:904.5px;top:513px;width:157px;height:1px;background:rgba(0,0,0,0.1);"></div>
<div class="t" style="left:908.1px;top:493.55px;font-size:16px;color:#1c7455;font-weight:400;transform:scaleX(1.19);transform-origin:0 0;">Completed</div>
<svg class="r" style="left:1044.5px;top:498.05px;" width="10" height="5.5" viewBox="0 0 10 5.5"><path d="M0 0H10L5.0 5.5Z" fill="#4b8b3b"/></svg>
<div class="r" style="left:0px;top:514px;width:49px;height:25px;background:#d3e3fd;"></div>
<div class="r" style="left:0px;top:539px;width:49px;height:1px;background:#c4c7c5;"></div>
<div class="r" style="left:49px;top:514px;width:1px;height:26px;background:#c4c7c5;"></div>
<div class="r" style="left:50px;top:514px;width:1012px;height:25px;background:#e7effc;"></div>
<div class="r" style="left:50px;top:539px;width:1012px;height:1px;background:#cbd3df;"></div>
<div class="r" style="left:205.5px;top:514px;width:1px;height:26px;background:#cbd3df;"></div>
<div class="r" style="left:342.5px;top:514px;width:1px;height:26px;background:#cbd3df;"></div>
<div class="r" style="left:554.5px;top:514px;width:1px;height:26px;background:#cbd3df;"></div>
<div class="r" style="left:718.5px;top:514px;width:1px;height:26px;background:#cbd3df;"></div>
<div class="r" style="left:903.5px;top:514px;width:1px;height:26px;background:#cbd3df;"></div>
<div class="t" style="left:21px;transform:translateX(-50%);top:519.74px;font-size:12px;color:#041e49;font-weight:700;">21</div>
<div class="t" style="left:54.4px;top:520.05px;font-size:16px;color:#2a2a2a;font-weight:400;transform:scaleX(1.125);transform-origin:0 0;">WO-56780</div>
<div class="r" style="left:719.5px;top:514px;width:184px;height:26px;background:#a51b25;"></div>
<div class="r" style="left:719.5px;top:539px;width:184px;height:1px;background:rgba(0,0,0,0.1);"></div>
<svg class="r" style="left:886.6px;top:524.05px;" width="10" height="5.5" viewBox="0 0 10 5.5"><path d="M0 0H10L5.0 5.5Z" fill="#f0c6cc"/></svg>
<div class="r" style="left:904.5px;top:514px;width:157px;height:26px;background:#c2dfc3;"></div>
<div class="r" style="left:904.5px;top:539px;width:157px;height:1px;background:rgba(0,0,0,0.1);"></div>
<div class="t" style="left:908.1px;top:519.55px;font-size:16px;color:#1c7455;font-weight:400;transform:scaleX(1.19);transform-origin:0 0;">Completed</div>
<svg class="r" style="left:1044.5px;top:524.05px;" width="10" height="5.5" viewBox="0 0 10 5.5"><path d="M0 0H10L5.0 5.5Z" fill="#4b8b3b"/></svg>
<div class="r" style="left:0px;top:540px;width:49px;height:25px;background:#d3e3fd;"></div>
<div class="r" style="left:0px;top:565px;width:49px;height:1px;background:#c4c7c5;"></div>
<div class="r" style="left:49px;top:540px;width:1px;height:26px;background:#c4c7c5;"></div>
<div class="r" style="left:50px;top:540px;width:1012px;height:25px;background:#e7effc;"></div>
<div class="r" style="left:50px;top:565px;width:1012px;height:1px;background:#cbd3df;"></div>
<div class="r" style="left:205.5px;top:540px;width:1px;height:26px;background:#cbd3df;"></div>
<div class="r" style="left:342.5px;top:540px;width:1px;height:26px;background:#cbd3df;"></div>
<div class="r" style="left:554.5px;top:540px;width:1px;height:26px;background:#cbd3df;"></div>
<div class="r" style="left:718.5px;top:540px;width:1px;height:26px;background:#cbd3df;"></div>
<div class="r" style="left:903.5px;top:540px;width:1px;height:26px;background:#cbd3df;"></div>
<div class="t" style="left:21px;transform:translateX(-50%);top:545.74px;font-size:12px;color:#041e49;font-weight:700;">22</div>
<div class="t" style="left:54.4px;top:546.05px;font-size:16px;color:#2a2a2a;font-weight:400;transform:scaleX(1.125);transform-origin:0 0;">WO-67890</div>
<div class="r" style="left:719.5px;top:540px;width:184px;height:26px;background:#c2dfc3;"></div>
<div class="r" style="left:719.5px;top:565px;width:184px;height:1px;background:rgba(0,0,0,0.1);"></div>
<svg class="r" style="left:886.6px;top:550.05px;" width="10" height="5.5" viewBox="0 0 10 5.5"><path d="M0 0H10L5.0 5.5Z" fill="#4b8b3b"/></svg>
<div class="r" style="left:904.5px;top:540px;width:157px;height:26px;background:#c2dfc3;"></div>
<div class="r" style="left:904.5px;top:565px;width:157px;height:1px;background:rgba(0,0,0,0.1);"></div>
<div class="t" style="left:908.1px;top:545.55px;font-size:16px;color:#1c7455;font-weight:400;transform:scaleX(1.19);transform-origin:0 0;">Completed</div>
<svg class="r" style="left:1044.5px;top:550.05px;" width="10" height="5.5" viewBox="0 0 10 5.5"><path d="M0 0H10L5.0 5.5Z" fill="#4b8b3b"/></svg>
<div class="r" style="left:0px;top:566px;width:49px;height:25px;background:#d3e3fd;"></div>
<div class="r" style="left:0px;top:591px;width:49px;height:1px;background:#c4c7c5;"></div>
<div class="r" style="left:49px;top:566px;width:1px;height:26px;background:#c4c7c5;"></div>
<div class="r" style="left:50px;top:566px;width:1012px;height:25px;background:#e7effc;"></div>
<div class="r" style="left:50px;top:591px;width:1012px;height:1px;background:#cbd3df;"></div>
<div class="r" style="left:205.5px;top:566px;width:1px;height:26px;background:#cbd3df;"></div>
<div class="r" style="left:342.5px;top:566px;width:1px;height:26px;background:#cbd3df;"></div>
<div class="r" style="left:554.5px;top:566px;width:1px;height:26px;background:#cbd3df;"></div>
<div class="r" style="left:718.5px;top:566px;width:1px;height:26px;background:#cbd3df;"></div>
<div class="r" style="left:903.5px;top:566px;width:1px;height:26px;background:#cbd3df;"></div>
<div class="t" style="left:21px;transform:translateX(-50%);top:571.74px;font-size:12px;color:#041e49;font-weight:700;">23</div>
<div class="t" style="left:54.4px;top:572.05px;font-size:16px;color:#2a2a2a;font-weight:400;transform:scaleX(1.125);transform-origin:0 0;">WO-67891</div>
<div class="r" style="left:719.5px;top:566px;width:184px;height:26px;background:#b4cde1;"></div>
<div class="r" style="left:719.5px;top:591px;width:184px;height:1px;background:rgba(0,0,0,0.1);"></div>
<svg class="r" style="left:886.6px;top:576.05px;" width="10" height="5.5" viewBox="0 0 10 5.5"><path d="M0 0H10L5.0 5.5Z" fill="#5d8fae"/></svg>
<div class="r" style="left:904.5px;top:566px;width:157px;height:26px;background:#c2dfc3;"></div>
<div class="r" style="left:904.5px;top:591px;width:157px;height:1px;background:rgba(0,0,0,0.1);"></div>
<div class="t" style="left:908.1px;top:571.55px;font-size:16px;color:#1c7455;font-weight:400;transform:scaleX(1.19);transform-origin:0 0;">Completed</div>
<svg class="r" style="left:1044.5px;top:576.05px;" width="10" height="5.5" viewBox="0 0 10 5.5"><path d="M0 0H10L5.0 5.5Z" fill="#4b8b3b"/></svg>
<div class="r" style="left:0px;top:592px;width:49px;height:25px;background:#d3e3fd;"></div>
<div class="r" style="left:0px;top:617px;width:49px;height:1px;background:#c4c7c5;"></div>
<div class="r" style="left:49px;top:592px;width:1px;height:26px;background:#c4c7c5;"></div>
<div class="r" style="left:50px;top:592px;width:1012px;height:25px;background:#e7effc;"></div>
<div class="r" style="left:50px;top:617px;width:1012px;height:1px;background:#cbd3df;"></div>
<div class="r" style="left:205.5px;top:592px;width:1px;height:26px;background:#cbd3df;"></div>
<div class="r" style="left:342.5px;top:592px;width:1px;height:26px;background:#cbd3df;"></div>
<div class="r" style="left:554.5px;top:592px;width:1px;height:26px;background:#cbd3df;"></div>
<div class="r" style="left:718.5px;top:592px;width:1px;height:26px;background:#cbd3df;"></div>
<div class="r" style="left:903.5px;top:592px;width:1px;height:26px;background:#cbd3df;"></div>
<div class="t" style="left:21px;transform:translateX(-50%);top:597.74px;font-size:12px;color:#041e49;font-weight:700;">24</div>
<div class="t" style="left:54.4px;top:598.05px;font-size:16px;color:#2a2a2a;font-weight:400;transform:scaleX(1.125);transform-origin:0 0;">WO-67892</div>
<div class="r" style="left:719.5px;top:592px;width:184px;height:26px;background:#a51b25;"></div>
<div class="r" style="left:719.5px;top:617px;width:184px;height:1px;background:rgba(0,0,0,0.1);"></div>
<svg class="r" style="left:886.6px;top:602.05px;" width="10" height="5.5" viewBox="0 0 10 5.5"><path d="M0 0H10L5.0 5.5Z" fill="#f0c6cc"/></svg>
<div class="r" style="left:904.5px;top:592px;width:157px;height:26px;background:#c2dfc3;"></div>
<div class="r" style="left:904.5px;top:617px;width:157px;height:1px;background:rgba(0,0,0,0.1);"></div>
<div class="t" style="left:908.1px;top:597.55px;font-size:16px;color:#1c7455;font-weight:400;transform:scaleX(1.19);transform-origin:0 0;">Completed</div>
<svg class="r" style="left:1044.5px;top:602.05px;" width="10" height="5.5" viewBox="0 0 10 5.5"><path d="M0 0H10L5.0 5.5Z" fill="#4b8b3b"/></svg>
<div class="r" style="left:0px;top:618px;width:49px;height:25px;background:#d3e3fd;"></div>
<div class="r" style="left:0px;top:643px;width:49px;height:1px;background:#c4c7c5;"></div>
<div class="r" style="left:49px;top:618px;width:1px;height:26px;background:#c4c7c5;"></div>
<div class="r" style="left:50px;top:618px;width:1012px;height:25px;background:#e7effc;"></div>
<div class="r" style="left:50px;top:643px;width:1012px;height:1px;background:#cbd3df;"></div>
<div class="r" style="left:205.5px;top:618px;width:1px;height:26px;background:#cbd3df;"></div>
<div class="r" style="left:342.5px;top:618px;width:1px;height:26px;background:#cbd3df;"></div>
<div class="r" style="left:554.5px;top:618px;width:1px;height:26px;background:#cbd3df;"></div>
<div class="r" style="left:718.5px;top:618px;width:1px;height:26px;background:#cbd3df;"></div>
<div class="r" style="left:903.5px;top:618px;width:1px;height:26px;background:#cbd3df;"></div>
<div class="t" style="left:21px;transform:translateX(-50%);top:623.74px;font-size:12px;color:#041e49;font-weight:700;">25</div>
<div class="t" style="left:54.4px;top:624.05px;font-size:16px;color:#2a2a2a;font-weight:400;transform:scaleX(1.125);transform-origin:0 0;">WO-67893</div>
<div class="r" style="left:719.5px;top:618px;width:184px;height:26px;background:#c2dfc3;"></div>
<div class="r" style="left:719.5px;top:643px;width:184px;height:1px;background:rgba(0,0,0,0.1);"></div>
<svg class="r" style="left:886.6px;top:628.05px;" width="10" height="5.5" viewBox="0 0 10 5.5"><path d="M0 0H10L5.0 5.5Z" fill="#4b8b3b"/></svg>
<div class="r" style="left:904.5px;top:618px;width:157px;height:26px;background:#e7c6cc;"></div>
<div class="r" style="left:904.5px;top:643px;width:157px;height:1px;background:rgba(0,0,0,0.1);"></div>
<div class="t" style="left:908.1px;top:623.55px;font-size:16px;color:#a51b25;font-weight:400;transform:scaleX(1.19);transform-origin:0 0;">On Hold</div>
<svg class="r" style="left:1044.5px;top:628.05px;" width="10" height="5.5" viewBox="0 0 10 5.5"><path d="M0 0H10L5.0 5.5Z" fill="#a51b25"/></svg>
<div class="r" style="left:0px;top:644px;width:49px;height:25px;background:#d3e3fd;"></div>
<div class="r" style="left:0px;top:669px;width:49px;height:1px;background:#c4c7c5;"></div>
<div class="r" style="left:49px;top:644px;width:1px;height:26px;background:#c4c7c5;"></div>
<div class="r" style="left:50px;top:644px;width:1012px;height:25px;background:#e7effc;"></div>
<div class="r" style="left:50px;top:669px;width:1012px;height:1px;background:#cbd3df;"></div>
<div class="r" style="left:205.5px;top:644px;width:1px;height:26px;background:#cbd3df;"></div>
<div class="r" style="left:342.5px;top:644px;width:1px;height:26px;background:#cbd3df;"></div>
<div class="r" style="left:554.5px;top:644px;width:1px;height:26px;background:#cbd3df;"></div>
<div class="r" style="left:718.5px;top:644px;width:1px;height:26px;background:#cbd3df;"></div>
<div class="r" style="left:903.5px;top:644px;width:1px;height:26px;background:#cbd3df;"></div>
<div class="t" style="left:21px;transform:translateX(-50%);top:649.74px;font-size:12px;color:#041e49;font-weight:700;">26</div>
<div class="t" style="left:54.4px;top:650.05px;font-size:16px;color:#2a2a2a;font-weight:400;transform:scaleX(1.125);transform-origin:0 0;">WO-67894</div>
<div class="r" style="left:719.5px;top:644px;width:184px;height:26px;background:#b4cde1;"></div>
<div class="r" style="left:719.5px;top:669px;width:184px;height:1px;background:rgba(0,0,0,0.1);"></div>
<svg class="r" style="left:886.6px;top:654.05px;" width="10" height="5.5" viewBox="0 0 10 5.5"><path d="M0 0H10L5.0 5.5Z" fill="#5d8fae"/></svg>
<div class="r" style="left:904.5px;top:644px;width:157px;height:26px;background:#afd3f6;"></div>
<div class="r" style="left:904.5px;top:669px;width:157px;height:1px;background:rgba(0,0,0,0.1);"></div>
<div class="t" style="left:908.1px;top:649.55px;font-size:16px;color:#1c5fae;font-weight:400;transform:scaleX(1.19);transform-origin:0 0;">Not Started</div>
<svg class="r" style="left:1044.5px;top:654.05px;" width="10" height="5.5" viewBox="0 0 10 5.5"><path d="M0 0H10L5.0 5.5Z" fill="#1c5fae"/></svg>
<div class="r" style="left:0px;top:670px;width:49px;height:25px;background:#d3e3fd;"></div>
<div class="r" style="left:0px;top:695px;width:49px;height:1px;background:#c4c7c5;"></div>
<div class="r" style="left:49px;top:670px;width:1px;height:26px;background:#c4c7c5;"></div>
<div class="r" style="left:50px;top:670px;width:1012px;height:25px;background:#e7effc;"></div>
<div class="r" style="left:50px;top:695px;width:1012px;height:1px;background:#cbd3df;"></div>
<div class="r" style="left:205.5px;top:670px;width:1px;height:26px;background:#cbd3df;"></div>
<div class="r" style="left:342.5px;top:670px;width:1px;height:26px;background:#cbd3df;"></div>
<div class="r" style="left:554.5px;top:670px;width:1px;height:26px;background:#cbd3df;"></div>
<div class="r" style="left:718.5px;top:670px;width:1px;height:26px;background:#cbd3df;"></div>
<div class="r" style="left:903.5px;top:670px;width:1px;height:26px;background:#cbd3df;"></div>
<div class="t" style="left:21px;transform:translateX(-50%);top:675.74px;font-size:12px;color:#041e49;font-weight:700;">27</div>
<div class="t" style="left:54.4px;top:676.05px;font-size:16px;color:#2a2a2a;font-weight:400;transform:scaleX(1.125);transform-origin:0 0;">WO-67895</div>
<div class="r" style="left:719.5px;top:670px;width:184px;height:26px;background:#a51b25;"></div>
<div class="r" style="left:719.5px;top:695px;width:184px;height:1px;background:rgba(0,0,0,0.1);"></div>
<svg class="r" style="left:886.6px;top:680.05px;" width="10" height="5.5" viewBox="0 0 10 5.5"><path d="M0 0H10L5.0 5.5Z" fill="#f0c6cc"/></svg>
<div class="r" style="left:904.5px;top:670px;width:157px;height:26px;background:#afd3f6;"></div>
<div class="r" style="left:904.5px;top:695px;width:157px;height:1px;background:rgba(0,0,0,0.1);"></div>
<div class="t" style="left:908.1px;top:675.55px;font-size:16px;color:#1c5fae;font-weight:400;transform:scaleX(1.19);transform-origin:0 0;">Not Started</div>
<svg class="r" style="left:1044.5px;top:680.05px;" width="10" height="5.5" viewBox="0 0 10 5.5"><path d="M0 0H10L5.0 5.5Z" fill="#1c5fae"/></svg>
<div class="r" style="left:0px;top:696px;width:49px;height:25px;background:#d3e3fd;"></div>
<div class="r" style="left:0px;top:721px;width:49px;height:1px;background:#c4c7c5;"></div>
<div class="r" style="left:49px;top:696px;width:1px;height:26px;background:#c4c7c5;"></div>
<div class="r" style="left:50px;top:696px;width:1012px;height:25px;background:#e7effc;"></div>
<div class="r" style="left:50px;top:721px;width:1012px;height:1px;background:#cbd3df;"></div>
<div class="r" style="left:205.5px;top:696px;width:1px;height:26px;background:#cbd3df;"></div>
<div class="r" style="left:342.5px;top:696px;width:1px;height:26px;background:#cbd3df;"></div>
<div class="r" style="left:554.5px;top:696px;width:1px;height:26px;background:#cbd3df;"></div>
<div class="r" style="left:718.5px;top:696px;width:1px;height:26px;background:#cbd3df;"></div>
<div class="r" style="left:903.5px;top:696px;width:1px;height:26px;background:#cbd3df;"></div>
<div class="t" style="left:21px;transform:translateX(-50%);top:701.74px;font-size:12px;color:#041e49;font-weight:700;">28</div>
<div class="t" style="left:54.4px;top:702.05px;font-size:16px;color:#2a2a2a;font-weight:400;transform:scaleX(1.125);transform-origin:0 0;">WO-67896</div>
<div class="r" style="left:719.5px;top:696px;width:184px;height:26px;background:#a51b25;"></div>
<div class="r" style="left:719.5px;top:721px;width:184px;height:1px;background:rgba(0,0,0,0.1);"></div>
<svg class="r" style="left:886.6px;top:706.05px;" width="10" height="5.5" viewBox="0 0 10 5.5"><path d="M0 0H10L5.0 5.5Z" fill="#f0c6cc"/></svg>
<div class="r" style="left:904.5px;top:696px;width:157px;height:26px;background:#afd3f6;"></div>
<div class="r" style="left:904.5px;top:721px;width:157px;height:1px;background:rgba(0,0,0,0.1);"></div>
<div class="t" style="left:908.1px;top:701.55px;font-size:16px;color:#1c5fae;font-weight:400;transform:scaleX(1.19);transform-origin:0 0;">Not Started</div>
<svg class="r" style="left:1044.5px;top:706.05px;" width="10" height="5.5" viewBox="0 0 10 5.5"><path d="M0 0H10L5.0 5.5Z" fill="#1c5fae"/></svg>
<div class="r" style="left:0px;top:722px;width:49px;height:25px;background:#d3e3fd;"></div>
<div class="r" style="left:0px;top:747px;width:49px;height:1px;background:#c4c7c5;"></div>
<div class="r" style="left:49px;top:722px;width:1px;height:26px;background:#c4c7c5;"></div>
<div class="r" style="left:50px;top:722px;width:1012px;height:25px;background:#e7effc;"></div>
<div class="r" style="left:50px;top:747px;width:1012px;height:1px;background:#cbd3df;"></div>
<div class="r" style="left:205.5px;top:722px;width:1px;height:26px;background:#cbd3df;"></div>
<div class="r" style="left:342.5px;top:722px;width:1px;height:26px;background:#cbd3df;"></div>
<div class="r" style="left:554.5px;top:722px;width:1px;height:26px;background:#cbd3df;"></div>
<div class="r" style="left:718.5px;top:722px;width:1px;height:26px;background:#cbd3df;"></div>
<div class="r" style="left:903.5px;top:722px;width:1px;height:26px;background:#cbd3df;"></div>
<div class="t" style="left:21px;transform:translateX(-50%);top:727.74px;font-size:12px;color:#041e49;font-weight:700;">29</div>
<div class="t" style="left:54.4px;top:728.05px;font-size:16px;color:#2a2a2a;font-weight:400;transform:scaleX(1.125);transform-origin:0 0;">WO-67897</div>
<div class="r" style="left:719.5px;top:722px;width:184px;height:26px;background:#c2dfc3;"></div>
<div class="r" style="left:719.5px;top:747px;width:184px;height:1px;background:rgba(0,0,0,0.1);"></div>
<div class="t" style="left:721.4px;top:727.55px;font-size:16px;color:#1c7455;font-weight:400;transform:scaleX(1.24);transform-origin:0 0;">Low</div>
<svg class="r" style="left:886.6px;top:732.05px;" width="10" height="5.5" viewBox="0 0 10 5.5"><path d="M0 0H10L5.0 5.5Z" fill="#4b8b3b"/></svg>
<div class="r" style="left:904.5px;top:722px;width:157px;height:26px;background:#afd3f6;"></div>
<div class="r" style="left:904.5px;top:747px;width:157px;height:1px;background:rgba(0,0,0,0.1);"></div>
<div class="t" style="left:908.1px;top:727.55px;font-size:16px;color:#1c5fae;font-weight:400;transform:scaleX(1.19);transform-origin:0 0;">Not Started</div>
<svg class="r" style="left:1044.5px;top:732.05px;" width="10" height="5.5" viewBox="0 0 10 5.5"><path d="M0 0H10L5.0 5.5Z" fill="#1c5fae"/></svg>
<div class="r" style="left:0px;top:748px;width:49px;height:25px;background:#d3e3fd;"></div>
<div class="r" style="left:0px;top:773px;width:49px;height:1px;background:#c4c7c5;"></div>
<div class="r" style="left:49px;top:748px;width:1px;height:26px;background:#c4c7c5;"></div>
<div class="r" style="left:50px;top:748px;width:1012px;height:25px;background:#e7effc;"></div>
<div class="r" style="left:50px;top:773px;width:1012px;height:1px;background:#cbd3df;"></div>
<div class="r" style="left:205.5px;top:748px;width:1px;height:26px;background:#cbd3df;"></div>
<div class="r" style="left:342.5px;top:748px;width:1px;height:26px;background:#cbd3df;"></div>
<div class="r" style="left:554.5px;top:748px;width:1px;height:26px;background:#cbd3df;"></div>
<div class="r" style="left:718.5px;top:748px;width:1px;height:26px;background:#cbd3df;"></div>
<div class="r" style="left:903.5px;top:748px;width:1px;height:26px;background:#cbd3df;"></div>
<div class="t" style="left:21px;transform:translateX(-50%);top:753.74px;font-size:12px;color:#041e49;font-weight:700;">30</div>
<div class="t" style="left:54.4px;top:754.05px;font-size:16px;color:#2a2a2a;font-weight:400;transform:scaleX(1.125);transform-origin:0 0;">WO-67898</div>
<div class="r" style="left:719.5px;top:748px;width:184px;height:26px;background:#b4cde1;"></div>
<div class="r" style="left:719.5px;top:773px;width:184px;height:1px;background:rgba(0,0,0,0.1);"></div>
<div class="t" style="left:721.4px;top:753.55px;font-size:16px;color:#2c5d7c;font-weight:400;transform:scaleX(1.24);transform-origin:0 0;">Medium</div>
<svg class="r" style="left:886.6px;top:758.05px;" width="10" height="5.5" viewBox="0 0 10 5.5"><path d="M0 0H10L5.0 5.5Z" fill="#5d8fae"/></svg>
<div class="r" style="left:904.5px;top:748px;width:157px;height:26px;background:#afd3f6;"></div>
<div class="r" style="left:904.5px;top:773px;width:157px;height:1px;background:rgba(0,0,0,0.1);"></div>
<div class="t" style="left:908.1px;top:753.55px;font-size:16px;color:#1c5fae;font-weight:400;transform:scaleX(1.19);transform-origin:0 0;">Not Started</div>
<svg class="r" style="left:1044.5px;top:758.05px;" width="10" height="5.5" viewBox="0 0 10 5.5"><path d="M0 0H10L5.0 5.5Z" fill="#1c5fae"/></svg>
<div class="r" style="left:0px;top:774px;width:49px;height:25px;background:#d3e3fd;"></div>
<div class="r" style="left:0px;top:799px;width:49px;height:1px;background:#c4c7c5;"></div>
<div class="r" style="left:49px;top:774px;width:1px;height:26px;background:#c4c7c5;"></div>
<div class="r" style="left:50px;top:774px;width:1012px;height:25px;background:#e7effc;"></div>
<div class="r" style="left:50px;top:799px;width:1012px;height:1px;background:#cbd3df;"></div>
<div class="r" style="left:205.5px;top:774px;width:1px;height:26px;background:#cbd3df;"></div>
<div class="r" style="left:342.5px;top:774px;width:1px;height:26px;background:#cbd3df;"></div>
<div class="r" style="left:554.5px;top:774px;width:1px;height:26px;background:#cbd3df;"></div>
<div class="r" style="left:718.5px;top:774px;width:1px;height:26px;background:#cbd3df;"></div>
<div class="r" style="left:903.5px;top:774px;width:1px;height:26px;background:#cbd3df;"></div>
<div class="t" style="left:21px;transform:translateX(-50%);top:779.74px;font-size:12px;color:#041e49;font-weight:700;">31</div>
<div class="t" style="left:54.4px;top:780.05px;font-size:16px;color:#2a2a2a;font-weight:400;transform:scaleX(1.125);transform-origin:0 0;">WO-67899</div>
<div class="r" style="left:719.5px;top:774px;width:184px;height:26px;background:#b4cde1;"></div>
<div class="r" style="left:719.5px;top:799px;width:184px;height:1px;background:rgba(0,0,0,0.1);"></div>
<div class="t" style="left:721.4px;top:779.55px;font-size:16px;color:#2c5d7c;font-weight:400;transform:scaleX(1.24);transform-origin:0 0;">Medium</div>
<svg class="r" style="left:886.6px;top:784.05px;" width="10" height="5.5" viewBox="0 0 10 5.5"><path d="M0 0H10L5.0 5.5Z" fill="#5d8fae"/></svg>
<div class="r" style="left:904.5px;top:774px;width:157px;height:26px;background:#afd3f6;"></div>
<div class="r" style="left:904.5px;top:799px;width:157px;height:1px;background:rgba(0,0,0,0.1);"></div>
<div class="t" style="left:908.1px;top:779.55px;font-size:16px;color:#1c5fae;font-weight:400;transform:scaleX(1.19);transform-origin:0 0;">Not Started</div>
<svg class="r" style="left:1044.5px;top:784.05px;" width="10" height="5.5" viewBox="0 0 10 5.5"><path d="M0 0H10L5.0 5.5Z" fill="#1c5fae"/></svg>
<div class="r" style="left:0px;top:800px;width:49px;height:25px;background:#ffffff;"></div>
<div class="r" style="left:0px;top:825px;width:49px;height:1px;background:#c4c7c5;"></div>
<div class="r" style="left:49px;top:800px;width:1px;height:26px;background:#c4c7c5;"></div>
<div class="r" style="left:50px;top:800px;width:1012px;height:25px;background:#ffffff;"></div>
<div class="r" style="left:50px;top:825px;width:1012px;height:1px;background:#e1e1e1;"></div>
<div class="r" style="left:205.5px;top:800px;width:1px;height:26px;background:#e1e1e1;"></div>
<div class="r" style="left:342.5px;top:800px;width:1px;height:26px;background:#e1e1e1;"></div>
<div class="r" style="left:554.5px;top:800px;width:1px;height:26px;background:#e1e1e1;"></div>
<div class="r" style="left:718.5px;top:800px;width:1px;height:26px;background:#e1e1e1;"></div>
<div class="r" style="left:903.5px;top:800px;width:1px;height:26px;background:#e1e1e1;"></div>
<div class="t" style="left:21px;transform:translateX(-50%);top:805.42px;font-size:12.5px;color:#444746;font-weight:400;">32</div>
<div class="r" style="left:0px;top:826px;width:49px;height:25px;background:#ffffff;"></div>
<div class="r" style="left:0px;top:851px;width:49px;height:1px;background:#c4c7c5;"></div>
<div class="r" style="left:49px;top:826px;width:1px;height:26px;background:#c4c7c5;"></div>
<div class="r" style="left:50px;top:826px;width:1012px;height:25px;background:#ffffff;"></div>
<div class="r" style="left:50px;top:851px;width:1012px;height:1px;background:#e1e1e1;"></div>
<div class="r" style="left:205.5px;top:826px;width:1px;height:26px;background:#e1e1e1;"></div>
<div class="r" style="left:342.5px;top:826px;width:1px;height:26px;background:#e1e1e1;"></div>
<div class="r" style="left:554.5px;top:826px;width:1px;height:26px;background:#e1e1e1;"></div>
<div class="r" style="left:718.5px;top:826px;width:1px;height:26px;background:#e1e1e1;"></div>
<div class="r" style="left:903.5px;top:826px;width:1px;height:26px;background:#e1e1e1;"></div>
<div class="t" style="left:21px;transform:translateX(-50%);top:831.42px;font-size:12.5px;color:#444746;font-weight:400;">33</div>
<div class="r" style="left:0px;top:852px;width:49px;height:25px;background:#ffffff;"></div>
<div class="r" style="left:0px;top:877px;width:49px;height:1px;background:#c4c7c5;"></div>
<div class="r" style="left:49px;top:852px;width:1px;height:26px;background:#c4c7c5;"></div>
<div class="r" style="left:50px;top:852px;width:1012px;height:25px;background:#ffffff;"></div>
<div class="r" style="left:50px;top:877px;width:1012px;height:1px;background:#e1e1e1;"></div>
<div class="r" style="left:205.5px;top:852px;width:1px;height:26px;background:#e1e1e1;"></div>
<div class="r" style="left:342.5px;top:852px;width:1px;height:26px;background:#e1e1e1;"></div>
<div class="r" style="left:554.5px;top:852px;width:1px;height:26px;background:#e1e1e1;"></div>
<div class="r" style="left:718.5px;top:852px;width:1px;height:26px;background:#e1e1e1;"></div>
<div class="r" style="left:903.5px;top:852px;width:1px;height:26px;background:#e1e1e1;"></div>
<div class="t" style="left:21px;transform:translateX(-50%);top:857.42px;font-size:12.5px;color:#444746;font-weight:400;">34</div>
<div class="r" style="left:50px;top:800px;width:1012px;height:0px;background:#fff;"></div>
<div class="r" style="left:1061.6px;top:202px;width:1.5px;height:598px;background:#2f7cf0;"></div>
<div class="r" style="left:50px;top:798.3px;width:1012px;height:1.5px;background:#2f7cf0;"></div>
<div class="r" style="left:1056.5px;top:793.5px;width:11px;height:11px;border-radius:50%;background:#0b57d0;border:0px solid #fff"></div>
<div class="t" style="right:979px;top:207.55px;font-size:16px;color:#1f1f1f;font-weight:400;transform:scaleX(1.1);transform-origin:100% 0;">Repairs</div>
<div class="t" style="right:979px;top:285.55px;font-size:16px;color:#1f1f1f;font-weight:400;transform:scaleX(1.1);transform-origin:100% 0;">Inspection</div>
<div class="t" style="right:979px;top:753.55px;font-size:16px;color:#1f1f1f;font-weight:400;transform:scaleX(1.1);transform-origin:100% 0;">Repairs</div>
<div class="r" style="left:216px;top:67.5px;width:398px;height:795px;background:#fff;border-radius:0 8px 8px 8px;box-shadow:0 1px 2px rgba(60,64,67,.3),0 2px 6px 2px rgba(60,64,67,.15)"></div>
<div class="r" style="left:222.8px;top:353.8px;width:346px;height:42px;background:#f1f3f4;"></div>
<svg class="r" style="left:234.3px;top:88.3px;" width="18" height="18" viewBox="0 0 18 18"><rect x="1.5" y="1.5" width="15" height="15" rx="1.4" fill="none" stroke="#444746" stroke-width="1.8"/></svg>
<div class="t" style="left:264px;top:87.87px;font-size:17.4px;color:#1f1f1f;font-weight:400;letter-spacing:0.35px;">Cells</div>
<svg class="r" style="left:584.4px;top:92.0px;" width="9" height="7.8" viewBox="0 0 9 7.8"><path d="M0 0L9 3.9 0 7.8z" fill="#757575"/></svg>
<svg class="r" style="left:234.3px;top:127.8px;" width="18" height="18" viewBox="0 0 18 18"><rect x="1.5" y="1.5" width="15" height="15" rx="1.4" fill="none" stroke="#444746" stroke-width="1.8"/><path d="M2 6.7h14M2 11.3h14" fill="none" stroke="#444746" stroke-width="1.8"/></svg>
<div class="t" style="left:264px;top:127.37px;font-size:17.4px;color:#1f1f1f;font-weight:400;letter-spacing:0.35px;">Rows</div>
<svg class="r" style="left:584.4px;top:131.5px;" width="9" height="7.8" viewBox="0 0 9 7.8"><path d="M0 0L9 3.9 0 7.8z" fill="#757575"/></svg>
<svg class="r" style="left:234.3px;top:167.5px;" width="18" height="18" viewBox="0 0 18 18"><rect x="1.5" y="1.5" width="15" height="15" rx="1.4" fill="none" stroke="#444746" stroke-width="1.8"/><path d="M6.7 2v14M11.3 2v14" fill="none" stroke="#444746" stroke-width="1.8"/></svg>
<div class="t" style="left:264px;top:167.07px;font-size:17.4px;color:#1f1f1f;font-weight:400;letter-spacing:0.35px;">Columns</div>
<svg class="r" style="left:584.4px;top:171.20000000000002px;" width="9" height="7.8" viewBox="0 0 9 7.8"><path d="M0 0L9 3.9 0 7.8z" fill="#757575"/></svg>
<svg class="r" style="left:234.3px;top:207.0px;" width="18" height="18" viewBox="0 0 18 18"><rect x="1" y="3" width="16" height="12" rx="1.2" fill="none" stroke="#444746" stroke-width="1.8"/><rect x="10.5" y="3.5" width="6" height="4" fill="#444746"/></svg>
<div class="t" style="left:264px;top:206.57px;font-size:17.4px;color:#1f1f1f;font-weight:400;letter-spacing:0.35px;">Sheet</div>
<div class="t" style="right:1006.5px;top:206.57px;font-size:17.4px;color:#747a80;font-weight:400;letter-spacing:0.3px;-webkit-text-stroke:0.35px #747a80;">Shift+F11</div>
<div class="r" style="left:216px;top:245.0px;width:398px;height:1.2px;background:#dadce0;"></div>
<svg class="r" style="left:234.3px;top:267.0px;" width="18" height="18" viewBox="0 0 18 18"><rect x="1.5" y="1.5" width="15" height="15" rx="1.4" fill="none" stroke="#444746" stroke-width="1.8"/><path d="M2 6.2h14M6.7 6.2v10M11.3 6.2v10" fill="none" stroke="#444746" stroke-width="1.8"/></svg>
<div class="t" style="left:264px;top:266.57px;font-size:17.4px;color:#1f1f1f;font-weight:400;letter-spacing:0.35px;">Tables</div>
<div class="r" style="left:216px;top:305.5px;width:398px;height:1.2px;background:#dadce0;"></div>
<svg class="r" style="left:234.3px;top:327.0px;" width="18" height="18" viewBox="0 0 18 18"><rect x="1.5" y="1.5" width="15" height="15" rx="1.4" fill="none" stroke="#444746" stroke-width="1.8"/><path d="M5.6 13.6V8.2M9 13.6V5.2M12.4 13.6v-2.6" stroke="#444746" stroke-width="1.8"/></svg>
<div class="t" style="left:264px;top:326.57px;font-size:17.4px;color:#1f1f1f;font-weight:400;letter-spacing:0.35px;">Chart</div>
<svg class="r" style="left:234.3px;top:367.0px;" width="18" height="18" viewBox="0 0 18 18"><rect x="0.8" y="0.8" width="5" height="3.8" rx="1.2" fill="#444746"/><rect x="7.2" y="0.8" width="10.3" height="3.8" rx="1.2" fill="#444746"/><rect x="0.8" y="6.2" width="5" height="10.6" rx="1.2" fill="#444746"/><path d="M8.8 14.8c3.5 0 6.5-1.8 7-6" fill="none" stroke="#444746" stroke-width="1.7"/><path d="M13.6 9.9l2.3-2.4 2.1 2.5M10.8 12.4L8.5 14.8l2.3 2.4" fill="none" stroke="#444746" stroke-width="1.7"/></svg>
<div class="t" style="left:264px;top:366.57px;font-size:17.4px;color:#1f1f1f;font-weight:400;letter-spacing:0.35px;">Pivot table</div>
<svg class="r" style="left:234.3px;top:406.5px;" width="18" height="18" viewBox="0 0 18 18"><rect x="1.5" y="1.5" width="15" height="15" rx="1.4" fill="none" stroke="#444746" stroke-width="1.8"/><path d="M4.3 13.2l2.8-3.2 1.9 1.8 2.3-2.8 2.6 4.2z" fill="#444746"/></svg>
<div class="t" style="left:264px;top:406.07px;font-size:17.4px;color:#1f1f1f;font-weight:400;letter-spacing:0.35px;">Image</div>
<svg class="r" style="left:234.3px;top:446.09999999999997px;" width="18" height="18" viewBox="0 0 18 18"><rect x="1.5" y="1.5" width="15" height="15" rx="1.4" fill="none" stroke="#444746" stroke-width="1.8"/><circle cx="7" cy="7" r="3" fill="#444746"/><rect x="8.3" y="9.3" width="5.5" height="4.5" fill="#444746"/></svg>
<div class="t" style="left:264px;top:445.67px;font-size:17.4px;color:#1f1f1f;font-weight:400;letter-spacing:0.35px;">Drawing</div>
<div class="r" style="left:216px;top:484.5px;width:398px;height:1.2px;background:#dadce0;"></div>
<svg class="r" style="left:234.3px;top:506.7px;" width="18" height="18" viewBox="0 0 18 18"><path d="M3 2h11v2.3H6.8l4.2 4.7-4.2 4.7H14V16H3v-1.6L7.8 9 3 3.6z" fill="#444746"/></svg>
<div class="t" style="left:264px;top:506.27px;font-size:17.4px;color:#1f1f1f;font-weight:400;letter-spacing:0.35px;">Function</div>
<svg class="r" style="left:234.3px;top:546.5px;" width="18" height="18" viewBox="0 0 18 18"><path d="M7.5 5H5a4 4 0 0 0 0 8h2.5M10.5 5H13a4 4 0 0 1 0 8h-2.5M5.5 9h7" fill="none" stroke="#444746" stroke-width="1.9"/></svg>
<div class="t" style="left:264px;top:546.07px;font-size:17.4px;color:#1f1f1f;font-weight:400;letter-spacing:0.35px;">Link</div>
<div class="t" style="right:1006.5px;top:546.07px;font-size:17.4px;color:#747a80;font-weight:400;letter-spacing:0.3px;-webkit-text-stroke:0.35px #747a80;">K</div>
<svg class="r" style="left:568.5px;top:547.4px;" width="14" height="14" viewBox="0 0 14 14"><g transform="scale(0.87)"><path d="M4.6 4.6V2.4A2.2 2.2 0 1 0 2.4 4.6H11.6A2.2 2.2 0 1 0 9.4 2.4V11.6A2.2 2.2 0 1 0 11.6 9.4H2.4A2.2 2.2 0 1 0 4.6 11.6Z" fill="none" stroke="#747a80" stroke-width="1.75"/></g></svg>
<div class="r" style="left:216px;top:584.5px;width:398px;height:1.2px;background:#dadce0;"></div>
<svg class="r" style="left:234.3px;top:607.0px;" width="18" height="18" viewBox="0 0 18 18"><rect x="1.5" y="1.5" width="15" height="15" rx="1.4" fill="none" stroke="#444746" stroke-width="1.8"/><path d="M5 9.2l2.6 2.6 5.2-5.4" fill="none" stroke="#444746" stroke-width="1.8"/></svg>
<div class="t" style="left:264px;top:606.57px;font-size:17.4px;color:#1f1f1f;font-weight:400;letter-spacing:0.35px;">Checkbox</div>
<svg class="r" style="left:232.5px;top:646.5px;" width="21" height="18" viewBox="0 0 21 18"><rect x="1" y="3.5" width="19" height="11" rx="5.5" fill="none" stroke="#444746" stroke-width="1.8"/><path d="M8 7.8h5.5l-2.75 2.8z" fill="#444746"/></svg>
<div class="t" style="left:264px;top:646.07px;font-size:17.4px;color:#1f1f1f;font-weight:400;letter-spacing:0.35px;">Dropdown</div>
<svg class="r" style="left:234.3px;top:686.1px;" width="18" height="18" viewBox="0 0 18 18"><circle cx="9" cy="9" r="8" fill="none" stroke="#444746" stroke-width="1.8"/><circle cx="6.2" cy="7" r="1.2" fill="#444746"/><circle cx="11.8" cy="7" r="1.2" fill="#444746"/><path d="M5.2 10.8a4.2 4.2 0 0 0 7.6 0" fill="none" stroke="#444746" stroke-width="1.6"/></svg>
<div class="t" style="left:264px;top:685.67px;font-size:17.4px;color:#1f1f1f;font-weight:400;letter-spacing:0.35px;">Emoji</div>
<svg class="r" style="left:232.5px;top:725.7px;" width="21" height="18" viewBox="0 0 21 18"><rect x="0.9" y="2" width="13" height="7.5" rx="3.75" fill="none" stroke="#444746" stroke-width="1.6"/><rect x="5" y="7.5" width="15" height="8.5" rx="4.25" fill="#fff" stroke="#444746" stroke-width="1.6"/><circle cx="4.5" cy="5.7" r="1.6" fill="#444746"/><path d="M13 11h4l-2 2z" fill="#444746"/></svg>
<div class="t" style="left:264px;top:725.27px;font-size:17.4px;color:#1f1f1f;font-weight:400;letter-spacing:0.35px;">Smart chips</div>
<svg class="r" style="left:584.4px;top:729.4px;" width="9" height="7.8" viewBox="0 0 9 7.8"><path d="M0 0L9 3.9 0 7.8z" fill="#757575"/></svg>
<div class="r" style="left:216px;top:764.0px;width:398px;height:1.2px;background:#dadce0;"></div>
<svg class="r" style="left:234.3px;top:786.0px;" width="18" height="18" viewBox="0 0 18 18"><path d="M1.5 1.5h15.5v12.2H5.5L1.5 17.5z" fill="none" stroke="#444746" stroke-width="1.8" stroke-linejoin="round"/><path d="M9.2 4v7M5.7 7.5h7" stroke="#444746" stroke-width="1.8"/></svg>
<div class="t" style="left:264px;top:785.57px;font-size:17.4px;color:#1f1f1f;font-weight:400;letter-spacing:0.35px;">Comment</div>
<div class="t" style="right:1006.5px;top:785.57px;font-size:17.4px;color:#747a80;font-weight:400;letter-spacing:0.3px;-webkit-text-stroke:0.35px #747a80;">+Option+M</div>
<svg class="r" style="left:492px;top:787.6999999999999px;" width="14" height="14" viewBox="0 0 14 14"><g transform="scale(0.87)"><path d="M4.6 4.6V2.4A2.2 2.2 0 1 0 2.4 4.6H11.6A2.2 2.2 0 1 0 9.4 2.4V11.6A2.2 2.2 0 1 0 11.6 9.4H2.4A2.2 2.2 0 1 0 4.6 11.6Z" fill="none" stroke="#747a80" stroke-width="1.75"/></g></svg>
<svg class="r" style="left:234.3px;top:826.5px;" width="18" height="18" viewBox="0 0 18 18"><path d="M1.9 1.9h14.2v9.5l-4.7 4.7H1.9z" fill="none" stroke="#444746" stroke-width="1.8" stroke-linejoin="round"/><path d="M11.5 16V11.5H16" fill="#444746" stroke="#444746" stroke-width="1.2"/><path d="M5 6h8M5 9.3h5.5" stroke="#444746" stroke-width="1.8"/></svg>
<div class="t" style="left:264px;top:826.07px;font-size:17.4px;color:#1f1f1f;font-weight:400;letter-spacing:0.35px;">Note</div>
<div class="t" style="right:1006.5px;top:826.07px;font-size:17.4px;color:#747a80;font-weight:400;letter-spacing:0.3px;-webkit-text-stroke:0.35px #747a80;">Shift+F2</div>
<div class="r" style="left:573px;top:294px;width:447px;height:423px;background:#fff;box-shadow:0 3px 14px 2px rgba(0,0,0,.17)"></div>
<div class="r" style="left:573px;top:294px;width:447px;height:423.4px;background:transparent;border:6px solid #ff2200;border-right-width:5.5px;border-bottom-width:6.2px;box-sizing:border-box;"></div>
<div class="r" style="left:217.4px;top:348px;width:355.6px;height:53.3px;background:transparent;border:5.6px solid #ff2200;box-sizing:border-box;"></div>
<div class="t" style="left:604px;top:330.55px;font-size:27.7px;color:#1f1f1f;font-weight:400;letter-spacing:0.1px;">Create pivot table</div>
<svg class="r" style="left:966px;top:335px;" width="18" height="18" viewBox="0 0 18 18"><path d="M1.5 1.5l15 15M16.5 1.5l-15 15" stroke="#5f6368" stroke-width="2.2"/></svg>
<div class="t" style="left:604.5px;top:394.04px;font-size:16.6px;color:#6f7377;font-weight:400;">Data range</div>
<div class="t" style="left:604px;top:424.86px;font-size:15.4px;color:#1f1f1f;font-weight:400;">Sheet1!A1:F31</div>
<svg class="r" style="left:958px;top:424px;" width="20" height="19" viewBox="0 0 20 19"><rect x="1.2" y="1.2" width="17.6" height="16.6" rx="1.5" fill="none" stroke="#6f7377" stroke-width="2.2"/><path d="M10 1v17M1 9.5h18" stroke="#6f7377" stroke-width="2.2"/></svg>
<div class="r" style="left:605px;top:452px;width:384px;height:2px;background:#e3e3e3;"></div>
<div class="t" style="left:604.3px;top:473.74px;font-size:17.2px;color:#6f7377;font-weight:400;letter-spacing:0.3px;">Insert to</div>
<div class="r" style="left:604.2px;top:512.4px;width:19.5px;height:19.5px;border-radius:50%;border:2.4px solid #188038;box-sizing:border-box;"></div>
<div class="r" style="left:609px;top:517.2px;width:10px;height:10px;border-radius:50%;background:#188038"></div>
<div class="t" style="left:632px;top:513.01px;font-size:17px;color:#1f1f1f;font-weight:400;">New sheet</div>
<div class="r" style="left:604.2px;top:545.2px;width:19.5px;height:19.5px;border-radius:50%;border:1.3px solid #c4c7c5;box-sizing:border-box;"></div>
<div class="t" style="left:632px;top:545.31px;font-size:17px;color:#1f1f1f;font-weight:400;">Existing sheet</div>
<div class="r" style="left:727px;top:642.4px;width:119px;height:44px;border-radius:5px;border:1.2px solid #dadce0;box-sizing:border-box;background:#fff"></div>
<div class="t" style="left:786.3px;transform:translateX(-50%);top:655.80px;font-size:17.6px;color:#188038;font-weight:700;">Cancel</div>
<div class="r" style="left:866px;top:642.4px;width:118.5px;height:44px;border-radius:5px;background:#1e7e3b"></div>
<div class="t" style="left:925.6px;transform:translateX(-50%);top:655.80px;font-size:17.6px;color:#ffffff;font-weight:700;">Create</div>
</body></html>
